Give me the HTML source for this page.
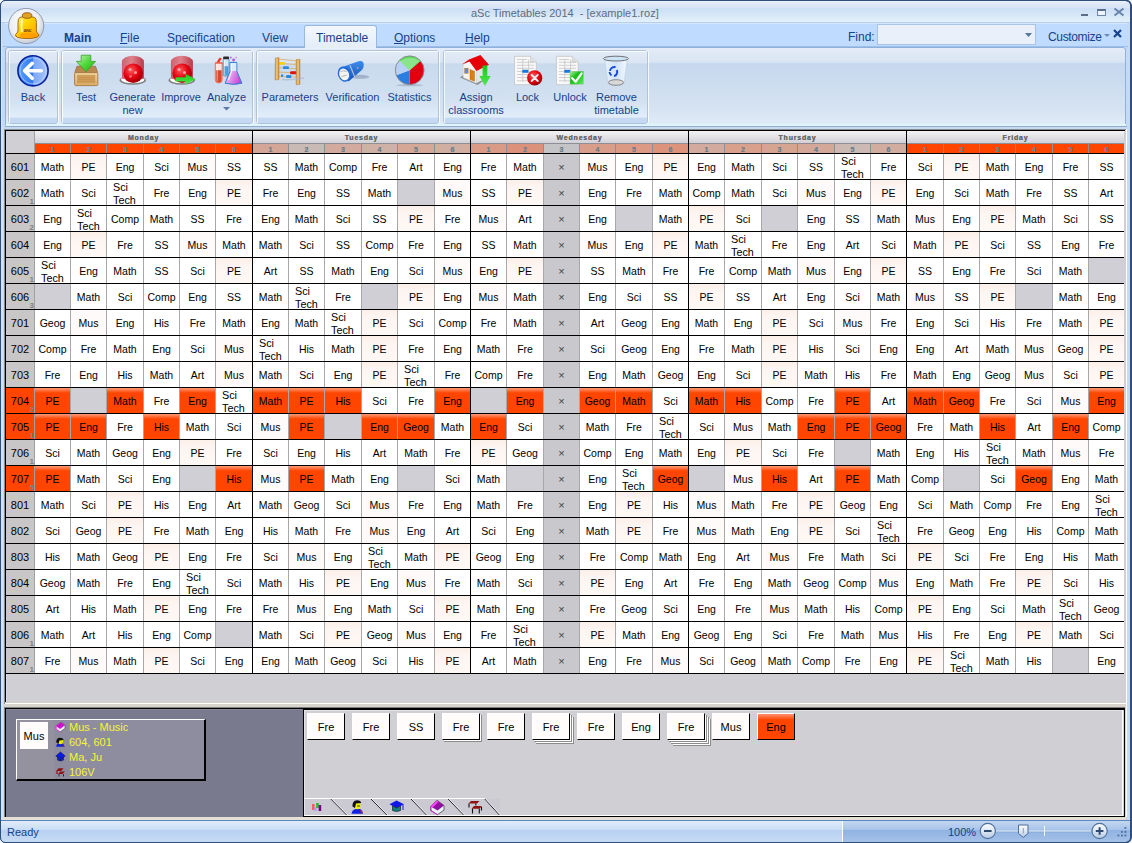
<!DOCTYPE html><html><head><meta charset="utf-8"><title>aSc Timetables</title><style>
*{margin:0;padding:0;box-sizing:border-box}
html,body{width:1132px;height:843px;overflow:hidden;background:#bfd6f3;font-family:"Liberation Sans",sans-serif}
div{position:absolute}
svg{position:absolute;overflow:visible}
.c{background:#fff;font-size:10.5px;color:#000;text-align:center;line-height:25px;padding-top:1px;white-space:nowrap;overflow:hidden}
.c2{line-height:13px;text-align:left;white-space:normal;padding-top:1px;font-size:10.8px}
.pe{background:linear-gradient(#fcefe9,#fdf5f1 30%,#fef8f5)}
.mu{background:#fffafa}
.o{background:linear-gradient(#ff9a78,#ff4500 5px,#ff4500)}
.g{background:#d0cfd5}
.x{background:#c9c8cc;color:#444;font-size:11px}
.vl{background:#a8a8a8;width:1px}
.bl{background:#000}
.rh{background:#c8c6c6;font-size:11px;color:#000;text-align:center;line-height:25px;padding-top:1px}
.rho{background:#ff4500}
.sub{font-size:8px;color:#808080;font-weight:bold;right:0px;bottom:0px;line-height:6px;height:6px;width:6px;text-align:right}
.ph{font-size:7px;font-weight:bold;color:#6f828c;text-align:center;line-height:9px;padding-top:1px;text-shadow:0 0 0.5px #6f828c}
.dn{font-size:7px;font-weight:bold;color:#6a6a6a;text-align:center;line-height:12px;letter-spacing:0.8px;padding-top:1px;text-shadow:0 0 0.5px #6a6a6a}
.rb{color:#15428b;font-size:11px;text-align:center;line-height:12.5px;white-space:nowrap}
.mt{color:#15428b;font-size:12px;line-height:14px;white-space:nowrap}
</style></head><body>
<div style="left:0px;top:0px;width:1132px;height:843px;background:#c5dbf5"></div>
<div style="left:0px;top:0px;width:1px;height:843px;background:#2e4f7c"></div>
<div style="left:1130px;top:0px;width:2px;height:843px;background:#2e4f7c"></div>
<div style="left:0px;top:842px;width:1132px;height:1px;background:#2e4f7c"></div>
<div style="left:1px;top:1px;width:2px;height:841px;background:#d3e3f7"></div>
<div style="left:0px;top:0px;width:1132px;height:1px;background:#2e4f7c"></div>
<div style="left:1px;top:1px;width:1129px;height:21px;background:linear-gradient(#eef3fb 0px,#e0eaf7 2px,#d6e4f6 7px,#cddff5 7px,#d3e4f7 12px,#e4f1fb 21px)"></div>
<div style="left:1px;top:22px;width:1129px;height:1px;background:#b3d0f2"></div>
<div style="left:471px;top:6px;font-size:11px;color:#5f6b7b;white-space:nowrap;line-height:14px">aSc Timetables 2014&nbsp; - [example1.roz]</div>
<div style="left:1081px;top:14px;width:7px;height:2px;background:#5a6e86"></div>
<div style="left:1097px;top:9px;width:9px;height:7px;border:1px solid #6f86a8;border-top:2px solid #5a6e86;background:#eef4fb"></div>
<svg style="left:1114px;top:8px" width="10" height="8"><path d="M0.5 0.5 L9.5 7.5 M9.5 0.5 L0.5 7.5" stroke="#6a85aa" stroke-width="2"/></svg>
<div style="left:1px;top:23px;width:1129px;height:24px;background:#bfdbff"></div>
<div style="left:1px;top:23px;width:1129px;height:1px;background:#d8e6f6"></div>
<div style="left:1127px;top:23px;width:3px;height:104px;background:#c4d9f3"></div>
<div style="left:1px;top:23px;width:4px;height:104px;background:#c4d9f3"></div>
<div style="left:1px;top:23px;width:1px;height:104px;background:#d6e5f8"></div>
<div style="left:3px;top:46px;width:1125px;height:1px;background:#9fbfe6"></div>
<div style="left:304px;top:25px;width:73px;height:24px;background:linear-gradient(#f4f8fd,#e2ecf8);border:1px solid #9ab8de;border-bottom:none;border-radius:3px 3px 0 0"></div>
<div class="mt" style="left:64px;top:31px;font-weight:bold;">Main</div>
<div class="mt" style="left:120px;top:31px;"><u>F</u>ile</div>
<div class="mt" style="left:167px;top:31px;">Specification</div>
<div class="mt" style="left:262px;top:31px;">View</div>
<div class="mt" style="left:316px;top:31px;">Timetable</div>
<div class="mt" style="left:394px;top:31px;"><u>O</u>ptions</div>
<div class="mt" style="left:465px;top:31px;"><u>H</u>elp</div>
<div class="mt" style="left:848px;top:30px">Find:</div>
<div style="left:877px;top:24px;width:159px;height:21px;background:#e9f0f9;border:1px solid #a9c3e3"></div>
<svg style="left:1025px;top:33px" width="7" height="4"><path d="M0 0 H7 L3.5 4Z" fill="#5577a0"/></svg>
<div class="mt" style="left:1048px;top:30px;letter-spacing:-0.35px">Customize</div>
<svg style="left:1104px;top:34px" width="6" height="3"><path d="M0 0 H6 L3 3Z" fill="#6d8db5"/></svg>
<svg style="left:1113px;top:29px" width="9" height="9"><path d="M1 1 L8 8 M8 1 L1 8" stroke="#15428b" stroke-width="2.2"/></svg>
<div style="left:5px;top:47px;width:1121px;height:80px;background:linear-gradient(#e3ecf7,#d9e5f3 18%,#c6d8ee 20%,#d6e3f2 80%,#e2edf9);border:1px solid #8eb0dd;border-top-color:#8eb0dd;border-radius:3px"></div>
<div style="left:305px;top:46px;width:71px;height:3px;background:linear-gradient(#e4eef9,#e8f0f9)"></div>
<div style="left:6px;top:124px;width:1120px;height:2px;background:#def5fc"></div>
<div style="left:5px;top:126px;width:1122px;height:1px;background:#97aac8"></div>
<div style="left:8px;top:50px;width:50px;height:74px;border:1px solid #afc3da;border-radius:3px;box-shadow:1px 0 0 rgba(255,255,255,0.8);background:linear-gradient(#e2ebf6,#dbe6f3 16%,#c9daee 18%,#d3e1f1 70%,#e2eefa 92%,#c5daf2 93%)"></div>
<div style="left:9px;top:51px;width:48px;height:72px;border-top:1px solid rgba(255,255,255,0.8);border-left:1px solid rgba(255,255,255,0.8);border-radius:2px 0 0 0;background:transparent"></div>
<div style="left:61px;top:50px;width:192px;height:74px;border:1px solid #afc3da;border-radius:3px;box-shadow:1px 0 0 rgba(255,255,255,0.8);background:linear-gradient(#e2ebf6,#dbe6f3 16%,#c9daee 18%,#d3e1f1 70%,#e2eefa 92%,#c5daf2 93%)"></div>
<div style="left:62px;top:51px;width:190px;height:72px;border-top:1px solid rgba(255,255,255,0.8);border-left:1px solid rgba(255,255,255,0.8);border-radius:2px 0 0 0;background:transparent"></div>
<div style="left:256px;top:50px;width:183px;height:74px;border:1px solid #afc3da;border-radius:3px;box-shadow:1px 0 0 rgba(255,255,255,0.8);background:linear-gradient(#e2ebf6,#dbe6f3 16%,#c9daee 18%,#d3e1f1 70%,#e2eefa 92%,#c5daf2 93%)"></div>
<div style="left:257px;top:51px;width:181px;height:72px;border-top:1px solid rgba(255,255,255,0.8);border-left:1px solid rgba(255,255,255,0.8);border-radius:2px 0 0 0;background:transparent"></div>
<div style="left:443px;top:50px;width:205px;height:74px;border:1px solid #afc3da;border-radius:3px;box-shadow:1px 0 0 rgba(255,255,255,0.8);background:linear-gradient(#e2ebf6,#dbe6f3 16%,#c9daee 18%,#d3e1f1 70%,#e2eefa 92%,#c5daf2 93%)"></div>
<div style="left:444px;top:51px;width:203px;height:72px;border-top:1px solid rgba(255,255,255,0.8);border-left:1px solid rgba(255,255,255,0.8);border-radius:2px 0 0 0;background:transparent"></div>
<div class="rb" style="left:-7px;top:91px;width:80px">Back</div>
<div class="rb" style="left:46px;top:91px;width:80px">Test</div>
<div class="rb" style="left:92.5px;top:91px;width:80px">Generate<br>new</div>
<div class="rb" style="left:141px;top:91px;width:80px">Improve</div>
<div class="rb" style="left:186.5px;top:91px;width:80px">Analyze</div>
<div class="rb" style="left:250px;top:91px;width:80px">Parameters</div>
<div class="rb" style="left:312.5px;top:91px;width:80px">Verification</div>
<div class="rb" style="left:369.5px;top:91px;width:80px">Statistics</div>
<div class="rb" style="left:436px;top:91px;width:80px">Assign<br>classrooms</div>
<div class="rb" style="left:487.5px;top:91px;width:80px">Lock</div>
<div class="rb" style="left:530px;top:91px;width:80px">Unlock</div>
<div class="rb" style="left:576.5px;top:91px;width:80px">Remove<br>timetable</div>
<svg style="left:223px;top:107px" width="7" height="4"><path d="M0 0 H7 L3.5 3.5Z" fill="#5a78a8"/></svg>
<svg style="left:0;top:0" width="1132" height="130" viewBox="0 0 1132 130">
<defs>
<radialGradient id="appbtn" cx="0.45" cy="0.4" r="0.6"><stop offset="0" stop-color="#ffffff"/><stop offset="0.7" stop-color="#eceef2"/><stop offset="1" stop-color="#c4c9d2"/></radialGradient>
<linearGradient id="bell" x1="0" y1="0" x2="1" y2="1"><stop offset="0" stop-color="#fff6a0"/><stop offset="0.35" stop-color="#ffd800"/><stop offset="1" stop-color="#ff9a00"/></linearGradient>
<linearGradient id="backg" x1="0" y1="0" x2="1" y2="0"><stop offset="0" stop-color="#5aa0ff"/><stop offset="0.5" stop-color="#2f78f0"/><stop offset="0.52" stop-color="#7ca8f8"/><stop offset="1" stop-color="#a8c4fb"/></linearGradient>
<linearGradient id="grn" x1="0" y1="0" x2="1" y2="1"><stop offset="0" stop-color="#c8f5b8"/><stop offset="0.5" stop-color="#4fd83a"/><stop offset="1" stop-color="#22b010"/></linearGradient>
<linearGradient id="grn2" x1="0" y1="0" x2="0" y2="1"><stop offset="0" stop-color="#18c818"/><stop offset="1" stop-color="#50e850"/></linearGradient>
<linearGradient id="box" x1="0" y1="0" x2="0" y2="1"><stop offset="0" stop-color="#f0d39e"/><stop offset="1" stop-color="#dcae6c"/></linearGradient>
<radialGradient id="redb" cx="0.4" cy="0.35" r="0.65"><stop offset="0" stop-color="#ff5a5a"/><stop offset="0.6" stop-color="#e20010"/><stop offset="1" stop-color="#a00008"/></radialGradient>
<linearGradient id="dome" x1="0" y1="0" x2="1" y2="0"><stop offset="0" stop-color="#d05a68"/><stop offset="0.45" stop-color="#de7e88"/><stop offset="1" stop-color="#b83040"/></linearGradient>
<linearGradient id="flask" x1="0" y1="0" x2="1" y2="1"><stop offset="0" stop-color="#f8d8f8"/><stop offset="1" stop-color="#c040d8"/></linearGradient>
<linearGradient id="wood" x1="0" y1="0" x2="1" y2="0"><stop offset="0" stop-color="#c89040"/><stop offset="0.5" stop-color="#f0cc88"/><stop offset="1" stop-color="#b88030"/></linearGradient>
<linearGradient id="torch" x1="0" y1="0" x2="0" y2="1"><stop offset="0" stop-color="#3c8cf0"/><stop offset="1" stop-color="#1450b8"/></linearGradient>
<linearGradient id="trash" x1="0" y1="0" x2="1" y2="0"><stop offset="0" stop-color="#e8f2fc"/><stop offset="0.5" stop-color="#d0e4f8"/><stop offset="1" stop-color="#f4f8fd"/></linearGradient>
<linearGradient id="chk" x1="0" y1="0" x2="1" y2="1"><stop offset="0" stop-color="#b0f0a0"/><stop offset="0.4" stop-color="#10c010"/><stop offset="1" stop-color="#60e860"/></linearGradient>
</defs>
<!-- app button -->
<circle cx="26.2" cy="26" r="17.6" fill="url(#appbtn)" stroke="#8e9cb2" stroke-width="1"/>
<path d="M19.8 17.4 Q18 18.6 18 22.5 V30.8 Q17.6 33.2 15.6 34.4 Q14.2 38.2 27.2 38.6 Q40.2 38.2 38.8 34.4 Q36.8 33.2 36.4 30.8 V22.5 Q36.4 18.6 34.6 17.4 Q27.2 14.8 19.8 17.4 Z" fill="url(#bell)" stroke="#9a5a10" stroke-width="0.9"/>
<ellipse cx="28" cy="35.2" rx="8.5" ry="2.6" fill="#ff9a00" opacity="0.85"/>
<path d="M22 19.5 Q21.2 25 21.8 32" stroke="#fffbe0" stroke-width="1.8" fill="none" opacity="0.85"/>
<ellipse cx="27.1" cy="15.5" rx="4.8" ry="2.8" fill="#e0a020" stroke="#8a4a10" stroke-width="0.8"/>
<text x="27.5" y="31.6" font-size="6.5" font-family="Liberation Serif" font-weight="bold" fill="#7a4010" text-anchor="middle" letter-spacing="-0.3">asc</text>
<!-- Back -->
<circle cx="33" cy="70.8" r="15.1" fill="url(#backg)" stroke="#0a209a" stroke-width="1.6"/>
<circle cx="33" cy="70.8" r="13" fill="none" stroke="#cfe2ff" stroke-width="0.8" opacity="0.7"/>
<path d="M41.3 70.8 H25.2 M32.2 63.3 L24.6 70.8 L32.2 78.3" stroke="#fff" stroke-width="3.6" stroke-linecap="round" stroke-linejoin="round" fill="none"/>
<!-- Test -->
<path d="M74.8 72.5 L77 66.3 H95.5 L97.6 72.5 Z" fill="#b88850" stroke="#9a6a38" stroke-width="0.8"/>
<rect x="74.6" y="72.6" width="23.2" height="13" rx="1" fill="url(#box)" stroke="#a87840" stroke-width="0.9"/>
<rect x="77.5" y="75.2" width="17.4" height="7.8" fill="#d8a860" stroke="#c08c48" stroke-width="0.5"/>
<path d="M78 77.2H94.5 M78 79.2H94.5 M78 81.2H94.5" stroke="#b88040" stroke-width="0.7"/>
<path d="M81.2 55.2 H90.8 V61.4 H95.6 L86 71.8 L76.4 61.4 H81.2 Z" fill="url(#grn)" stroke="#3a9a2a" stroke-width="0.8"/>
<!-- Generate -->
<ellipse cx="132.8" cy="80.2" rx="13.2" ry="4.6" fill="#808080"/>
<ellipse cx="132.8" cy="79.6" rx="11.8" ry="3.7" fill="#ffffff"/>
<path d="M121.9 62 A11 6.2 0 0 1 143.9 62 V78.5 Q132.8 82.5 121.9 78.5 Z" fill="url(#dome)" opacity="0.95"/>
<circle cx="133.2" cy="73.2" r="9.8" fill="url(#redb)"/>
<circle cx="130" cy="69.5" r="1.5" fill="#ffc0c0" opacity="0.8"/><circle cx="135.5" cy="72.5" r="1.5" fill="#ffc0c0" opacity="0.8"/><circle cx="130.5" cy="76.5" r="1.3" fill="#ffc0c0" opacity="0.6"/>
<!-- Improve -->
<ellipse cx="181.8" cy="80.2" rx="13.2" ry="4.6" fill="#808080"/>
<ellipse cx="181.8" cy="79.6" rx="11.8" ry="3.7" fill="#ffffff"/>
<path d="M170.9 62 A11 6.2 0 0 1 192.9 62 V78.5 Q181.8 82.5 170.9 78.5 Z" fill="url(#dome)" opacity="0.95"/>
<circle cx="182.2" cy="73.2" r="9.8" fill="url(#redb)"/>
<circle cx="179" cy="69.5" r="1.5" fill="#ffc0c0" opacity="0.8"/><circle cx="184.5" cy="72.5" r="1.5" fill="#ffc0c0" opacity="0.8"/>
<path d="M175.4 77.2 H185.6 V73.8 L195.6 79.2 L185.6 84.6 V81.4 H175.4 Z" fill="url(#grn2)"/>
<!-- Analyze -->
<path d="M215.3 62.8 H222.2 V79.6 A3.45 3.45 0 0 1 215.3 79.6 Z" fill="#fbe2dc" stroke="#e4674c" stroke-width="0.9"/>
<path d="M215.9 70.2 H221.6 V79.6 A2.85 2.85 0 0 1 215.9 79.6 Z" fill="#d64a2c"/>
<path d="M217.2 64 V81" stroke="#fff" stroke-width="1" opacity="0.55"/>
<path d="M216.6 62.2 L219.6 57.4 L221.8 58.6 L219 62.8 Z" fill="#f03a20"/><path d="M215.2 63 H222.3" stroke="#f05a40" stroke-width="1.2"/>
<rect x="223.2" y="58.4" width="5.8" height="17.6" rx="1.2" fill="#cfe8f6" stroke="#3a8cc8" stroke-width="0.8"/>
<rect x="223.8" y="66.2" width="4.6" height="9.2" fill="#4aa0d8"/>
<rect x="223.2" y="56.4" width="5.8" height="2.8" rx="0.6" fill="#2a2a2a"/>
<path d="M224.6 60 V75" stroke="#fff" stroke-width="0.9" opacity="0.6"/>
<defs><linearGradient id="flask2" x1="0" y1="0" x2="1" y2="0.6"><stop offset="0" stop-color="#fff0fc"/><stop offset="0.45" stop-color="#e8a8f0"/><stop offset="1" stop-color="#c848d8"/></linearGradient></defs>
<path d="M230 62.4 H236.8 V71.2 L241.9 83.2 Q233.5 85.6 225.1 83.2 L230 71.2 Z" fill="url(#flask2)" stroke="#2a80d0" stroke-width="1"/>
<path d="M230.5 63 H236.3 V71 H230.5 Z" fill="#d8ecfa"/>
<path d="M231.5 64 V71.5 L228.5 80" stroke="#fff" stroke-width="1.1" opacity="0.8" fill="none"/>
<circle cx="233.6" cy="60" r="1.4" fill="#b050e0"/><circle cx="230.8" cy="57.6" r="1.1" fill="#c070f0"/><circle cx="236.2" cy="57.4" r="1" fill="#d8a0f0"/>
<!-- Parameters abacus -->
<path d="M277.5 59 L298 61 M277 63.2 L297.5 64.6 M277 67.6 L297.5 68.8 M277 72 L297.5 73 M277 76.4 L297.5 77.2" stroke="#d8b070" stroke-width="0.9"/>
<rect x="278.3" y="62" width="6.8" height="2.8" rx="1.2" fill="#f0d010"/>
<rect x="295.2" y="62.6" width="2.6" height="2.8" rx="1" fill="#f0d010"/>
<rect x="283" y="66.3" width="6" height="2.8" rx="1.2" fill="#2a88e0"/>
<rect x="290" y="71.3" width="7" height="3" rx="1.2" fill="#e01010"/>
<rect x="281" y="74.2" width="2.2" height="2.8" rx="1" fill="#2a88e0"/>
<rect x="286" y="75" width="5.4" height="3" rx="1.2" fill="#2a88e0"/>
<path d="M275.3 58 L279 57.6 L279 79.6 L275 80 Z" fill="url(#wood)" stroke="#b08040" stroke-width="0.5"/>
<path d="M296.2 59.6 L300 59.2 L300 84.3 L296.2 84.8 Z" fill="url(#wood)" stroke="#b08040" stroke-width="0.5"/>
<path d="M282 79.5 Q292 80.5 304 78" stroke="#aab4c4" stroke-width="1.5" fill="none" opacity="0.6"/>
<!-- Verification flashlight -->
<ellipse cx="360" cy="76.8" rx="9.5" ry="2" fill="#8898b0" opacity="0.6"/>
<path d="M342.5 67 L358.5 61.3 Q363.6 60 363.8 64.6 Q363.9 68.4 361.6 70.2 L348.5 81.6 Z" fill="url(#torch)"/>
<path d="M350 65.2 L354.8 77.2" stroke="#b8c8e0" stroke-width="1.1"/>
<circle cx="357.6" cy="68" r="0.9" fill="#f0a040"/>
<ellipse cx="344.3" cy="74.1" rx="6.3" ry="7.8" transform="rotate(-22 344.3 74.1)" fill="#1e6ad8"/>
<ellipse cx="344.1" cy="74.4" rx="4.8" ry="6.1" transform="rotate(-22 344.1 74.4)" fill="#f4f4f4"/>
<path d="M340.6 71.5 Q343.5 70 346.5 71.5 M341.5 76.5 L346.8 75" stroke="#9a9a9a" stroke-width="0.7" fill="none"/>
<!-- Statistics pie -->
<ellipse cx="409.7" cy="85.2" rx="13" ry="1" fill="#8898b0" opacity="0.5"/>
<path d="M409.7 70.3 L420.4 61 A14.2 14.2 0 0 1 409.7 84.5 Z" fill="#e00010"/>
<path d="M409.7 70.3 L409.7 84.5 A14.2 14.2 0 0 1 396.4 75.2 Z" fill="#2a7ee0"/>
<path d="M409.7 70.3 L396.4 75.2 A14.2 14.2 0 0 1 399.4 60.5 Z" fill="#b8d0f4"/>
<path d="M409.7 70.3 L399.4 60.5 A14.2 14.2 0 0 1 420.4 61 Z" fill="#58d858"/>
<path d="M400 61 Q409.7 55 419.5 60.5 L409.7 70.3Z" fill="#fff" opacity="0.3"/>
<circle cx="409.7" cy="70.3" r="14.4" fill="none" stroke="#8a8a8a" stroke-width="1"/>
<!-- Assign house -->
<path d="M460 77.6 L477.5 85 L483 81 L465 74 Z" fill="#7a7a7a" opacity="0.8"/>
<path d="M463.2 64.5 L469.5 60.5 L476.4 70 L476.4 83.2 L463.2 77.6 Z" fill="#f4f4f4" stroke="#c8c8c8" stroke-width="0.5"/>
<path d="M476.4 70 L488 64.5 L488 77 L476.4 83.2 Z" fill="#e4e4e4"/>
<path d="M461.9 64.6 L469 59.6 L480.4 55.1 L489 64.8 L476.4 71 L469.5 61.5 Z" fill="#e80008"/>
<rect x="464.3" y="68" width="4.2" height="5.6" fill="#b08040"/><rect x="464.9" y="68.6" width="3" height="4.4" fill="#5a90e0"/>
<path d="M470 69.5 L474.5 71.2 L474.5 81.2 L470 79.5 Z" fill="#d88010" stroke="#a06010" stroke-width="0.4"/>
<path d="M482.6 65.5 H487.4 V76 H490.6 L485 86 L479.4 76 H482.6 Z" fill="url(#grn2)"/>
<!-- Lock -->
<path d="M514.5 56.3 H530.5 L536.3 62 V84.7 H514.5 Z" fill="#f8f8f8" stroke="#c4c4c4" stroke-width="0.8"/>
<path d="M530.5 56.3 V62 H536.3" fill="#e0e0e0" stroke="#c4c4c4" stroke-width="0.6"/>
<path d="M517 59.5 H527 M517 62.3 H534 M517 65.3H534 M517 68.3H534 M517 71.5H534 M517 74.5H534 M517 77.5H534 M517 80.8H534" stroke="#c0c0c0" stroke-width="0.7"/>
<path d="M522.8 59.5 V82 M528.6 59.5 V82" stroke="#c0c0c0" stroke-width="0.7"/>
<rect x="522.3" y="69.8" width="6" height="3" fill="#1878e0"/>
<circle cx="534.7" cy="77.9" r="7.6" fill="url(#redb)"/>
<path d="M531.6 74.8 L537.8 81 M537.8 74.8 L531.6 81" stroke="#e8f0f0" stroke-width="1.9" stroke-linecap="round"/>
<!-- Unlock -->
<path d="M556.4 56.3 H572.4 L578.2 62 V84.7 H556.4 Z" fill="#f8f8f8" stroke="#c4c4c4" stroke-width="0.8"/>
<path d="M572.4 56.3 V62 H578.2" fill="#e0e0e0" stroke="#c4c4c4" stroke-width="0.6"/>
<path d="M559 59.5 H569 M559 62.3 H576 M559 65.3H576 M559 68.3H576 M559 71.5H576 M559 74.5H576 M559 77.5H576 M559 80.8H576" stroke="#c0c0c0" stroke-width="0.7"/>
<path d="M564.8 59.5 V82 M570.6 59.5 V82" stroke="#c0c0c0" stroke-width="0.7"/>
<rect x="564.3" y="69.8" width="6" height="3" fill="#1878e0"/>
<rect x="570" y="71.2" width="13.5" height="13.1" fill="url(#chk)" stroke="#a0c0a0" stroke-width="0.4"/>
<path d="M572.2 78.2 L575.6 81.8 L581.6 73.4" stroke="#fff" stroke-width="2.2" fill="none" stroke-linecap="round" stroke-linejoin="round"/>
<!-- Remove trash -->
<path d="M604.5 59 L607.8 82.5 Q616 86.5 624.2 82.5 L627.2 59 Z" fill="url(#trash)" stroke="#b8cce0" stroke-width="0.6"/>
<ellipse cx="616" cy="82.5" rx="7.6" ry="2.8" fill="#d8d8d8" stroke="#707070" stroke-width="0.8"/>
<ellipse cx="615.9" cy="58.6" rx="12.6" ry="2.4" fill="#cce4f8" stroke="#707070" stroke-width="1"/>
<path d="M610 71 A4.5 4.5 0 0 1 615.6 67.2 M616.8 70 A4.5 4.5 0 0 1 614 76.2 M611.5 75.4 A4.5 4.5 0 0 1 609.5 72" stroke="#1848d8" stroke-width="1.9" fill="none"/>
</svg>

<div style="left:4px;top:129px;width:1122px;height:1px;background:#8c8c8c"></div>
<div style="left:4px;top:129px;width:1px;height:580px;background:#8c8c8c"></div>
<div style="left:5px;top:130px;width:1120px;height:1px;background:#000"></div>
<div style="left:5px;top:130px;width:1px;height:579px;background:#000"></div>
<div style="left:6px;top:131px;width:1119px;height:571px;background:#d0cfd4"></div>
<div style="left:6px;top:131px;width:1119px;height:1px;background:#e2e2e6"></div>
<div style="left:6px;top:131px;width:1px;height:571px;background:#dcdce0"></div>
<div style="left:1125px;top:130px;width:1px;height:573px;background:#d4d0c8"></div>
<div style="left:1126px;top:129px;width:1px;height:575px;background:#fff"></div>
<div style="left:5px;top:702px;width:1121px;height:1px;background:#d4d0c8"></div>
<div style="left:5px;top:703px;width:1122px;height:1px;background:#fff"></div>
<div style="left:4px;top:704px;width:1123px;height:3px;background:#d8d4cc"></div>
<div style="left:4px;top:707px;width:1122px;height:1px;background:#808080"></div>
<div style="left:1125px;top:704px;width:2px;height:116px;background:#d8d4cc"></div>
<div style="left:1126px;top:704px;width:1px;height:113px;background:#fbfaf6"></div>
<div style="left:35px;top:131px;width:1089px;height:12px;background:linear-gradient(#f3f3f5,#d1d0d6)"></div>
<div style="left:35px;top:143px;width:1089px;height:1px;background:#8c9094"></div>
<div class="dn" style="left:35px;top:131px;width:217px;height:12px">Monday</div>
<div class="ph" style="left:35px;top:144px;width:35px;height:9px;background:#ff4500">1</div>
<div class="ph" style="left:71px;top:144px;width:35px;height:9px;background:#ff4500">2</div>
<div style="left:70px;top:144px;width:1px;height:9px;background:#8c9094"></div>
<div class="ph" style="left:107px;top:144px;width:36px;height:9px;background:#ff4500">3</div>
<div style="left:106px;top:144px;width:1px;height:9px;background:#8c9094"></div>
<div class="ph" style="left:144px;top:144px;width:35px;height:9px;background:#ff4500">4</div>
<div style="left:143px;top:144px;width:1px;height:9px;background:#8c9094"></div>
<div class="ph" style="left:180px;top:144px;width:35px;height:9px;background:#ff4500">5</div>
<div style="left:179px;top:144px;width:1px;height:9px;background:#8c9094"></div>
<div class="ph" style="left:216px;top:144px;width:36px;height:9px;background:#ff4500">6</div>
<div style="left:215px;top:144px;width:1px;height:9px;background:#8c9094"></div>
<div class="dn" style="left:253px;top:131px;width:217px;height:12px">Tuesday</div>
<div class="ph" style="left:253px;top:144px;width:35px;height:9px;background:#d3a697">1</div>
<div class="ph" style="left:289px;top:144px;width:35px;height:9px;background:#c9bab5">2</div>
<div style="left:288px;top:144px;width:1px;height:9px;background:#8c9094"></div>
<div class="ph" style="left:325px;top:144px;width:36px;height:9px;background:#d2ab9e">3</div>
<div style="left:324px;top:144px;width:1px;height:9px;background:#8c9094"></div>
<div class="ph" style="left:362px;top:144px;width:35px;height:9px;background:#cfb1a6">4</div>
<div style="left:361px;top:144px;width:1px;height:9px;background:#8c9094"></div>
<div class="ph" style="left:398px;top:144px;width:36px;height:9px;background:#d4a796">5</div>
<div style="left:397px;top:144px;width:1px;height:9px;background:#8c9094"></div>
<div class="ph" style="left:435px;top:144px;width:35px;height:9px;background:#d0aea2">6</div>
<div style="left:434px;top:144px;width:1px;height:9px;background:#8c9094"></div>
<div class="dn" style="left:471px;top:131px;width:217px;height:12px">Wednesday</div>
<div class="ph" style="left:471px;top:144px;width:35px;height:9px;background:#d99b86">1</div>
<div class="ph" style="left:507px;top:144px;width:36px;height:9px;background:#dc917a">2</div>
<div style="left:506px;top:144px;width:1px;height:9px;background:#8c9094"></div>
<div class="ph" style="left:544px;top:144px;width:35px;height:9px;background:#c4c4c6">3</div>
<div style="left:543px;top:144px;width:1px;height:9px;background:#8c9094"></div>
<div class="ph" style="left:580px;top:144px;width:35px;height:9px;background:#d99e8a">4</div>
<div style="left:579px;top:144px;width:1px;height:9px;background:#8c9094"></div>
<div class="ph" style="left:616px;top:144px;width:36px;height:9px;background:#da9a84">5</div>
<div style="left:615px;top:144px;width:1px;height:9px;background:#8c9094"></div>
<div class="ph" style="left:653px;top:144px;width:35px;height:9px;background:#dc927b">6</div>
<div style="left:652px;top:144px;width:1px;height:9px;background:#8c9094"></div>
<div class="dn" style="left:689px;top:131px;width:217px;height:12px">Thursday</div>
<div class="ph" style="left:689px;top:144px;width:35px;height:9px;background:#d3ab9e">1</div>
<div class="ph" style="left:725px;top:144px;width:36px;height:9px;background:#d9a08b">2</div>
<div style="left:724px;top:144px;width:1px;height:9px;background:#8c9094"></div>
<div class="ph" style="left:762px;top:144px;width:35px;height:9px;background:#d6a592">3</div>
<div style="left:761px;top:144px;width:1px;height:9px;background:#8c9094"></div>
<div class="ph" style="left:798px;top:144px;width:36px;height:9px;background:#d4a898">4</div>
<div style="left:797px;top:144px;width:1px;height:9px;background:#8c9094"></div>
<div class="ph" style="left:835px;top:144px;width:35px;height:9px;background:#cbb9b3">5</div>
<div style="left:834px;top:144px;width:1px;height:9px;background:#8c9094"></div>
<div class="ph" style="left:871px;top:144px;width:35px;height:9px;background:#d2ad9f">6</div>
<div style="left:870px;top:144px;width:1px;height:9px;background:#8c9094"></div>
<div class="dn" style="left:907px;top:131px;width:217px;height:12px">Friday</div>
<div class="ph" style="left:907px;top:144px;width:36px;height:9px;background:#ff4500">1</div>
<div class="ph" style="left:944px;top:144px;width:35px;height:9px;background:#ff4500">2</div>
<div style="left:943px;top:144px;width:1px;height:9px;background:#8c9094"></div>
<div class="ph" style="left:980px;top:144px;width:35px;height:9px;background:#ff4500">3</div>
<div style="left:979px;top:144px;width:1px;height:9px;background:#8c9094"></div>
<div class="ph" style="left:1016px;top:144px;width:36px;height:9px;background:#ff4500">4</div>
<div style="left:1015px;top:144px;width:1px;height:9px;background:#8c9094"></div>
<div class="ph" style="left:1053px;top:144px;width:35px;height:9px;background:#ff4500">5</div>
<div style="left:1052px;top:144px;width:1px;height:9px;background:#8c9094"></div>
<div class="ph" style="left:1089px;top:144px;width:35px;height:9px;background:#ff4500">6</div>
<div style="left:1088px;top:144px;width:1px;height:9px;background:#8c9094"></div>
<div style="left:6px;top:131px;width:28px;height:22px;background:#d0cfd4"></div>
<div style="left:34px;top:131px;width:1px;height:543px;background:#a0a0a0"></div>
<div style="left:252px;top:131px;width:1px;height:543px;background:#000"></div>
<div style="left:470px;top:131px;width:1px;height:543px;background:#000"></div>
<div style="left:688px;top:131px;width:1px;height:543px;background:#000"></div>
<div style="left:906px;top:131px;width:1px;height:543px;background:#000"></div>
<div style="left:5px;top:153px;width:1119px;height:1px;background:#000"></div>
<div class="rh" style="left:6px;top:154px;width:28px;height:25px;">601</div>
<div class="c" style="left:35px;top:154px;width:35px;height:25px;">Math</div>
<div style="left:70px;top:154px;width:1px;height:25px;background:#a8a8a8"></div>
<div class="c pe" style="left:71px;top:154px;width:35px;height:25px;">PE</div>
<div style="left:106px;top:154px;width:1px;height:25px;background:#a8a8a8"></div>
<div class="c" style="left:107px;top:154px;width:36px;height:25px;">Eng</div>
<div style="left:143px;top:154px;width:1px;height:25px;background:#a8a8a8"></div>
<div class="c" style="left:144px;top:154px;width:35px;height:25px;">Sci</div>
<div style="left:179px;top:154px;width:1px;height:25px;background:#a8a8a8"></div>
<div class="c mu" style="left:180px;top:154px;width:35px;height:25px;">Mus</div>
<div style="left:215px;top:154px;width:1px;height:25px;background:#a8a8a8"></div>
<div class="c" style="left:216px;top:154px;width:36px;height:25px;">SS</div>
<div class="c" style="left:253px;top:154px;width:35px;height:25px;">SS</div>
<div style="left:288px;top:154px;width:1px;height:25px;background:#a8a8a8"></div>
<div class="c" style="left:289px;top:154px;width:35px;height:25px;">Math</div>
<div style="left:324px;top:154px;width:1px;height:25px;background:#a8a8a8"></div>
<div class="c" style="left:325px;top:154px;width:36px;height:25px;">Comp</div>
<div style="left:361px;top:154px;width:1px;height:25px;background:#a8a8a8"></div>
<div class="c" style="left:362px;top:154px;width:35px;height:25px;">Fre</div>
<div style="left:397px;top:154px;width:1px;height:25px;background:#a8a8a8"></div>
<div class="c" style="left:398px;top:154px;width:36px;height:25px;">Art</div>
<div style="left:434px;top:154px;width:1px;height:25px;background:#a8a8a8"></div>
<div class="c" style="left:435px;top:154px;width:35px;height:25px;">Eng</div>
<div class="c" style="left:471px;top:154px;width:35px;height:25px;">Fre</div>
<div style="left:506px;top:154px;width:1px;height:25px;background:#a8a8a8"></div>
<div class="c" style="left:507px;top:154px;width:36px;height:25px;">Math</div>
<div style="left:543px;top:154px;width:1px;height:25px;background:#a8a8a8"></div>
<div class="c x" style="left:544px;top:154px;width:35px;height:25px;">&#215;</div>
<div style="left:579px;top:154px;width:1px;height:25px;background:#a8a8a8"></div>
<div class="c mu" style="left:580px;top:154px;width:35px;height:25px;">Mus</div>
<div style="left:615px;top:154px;width:1px;height:25px;background:#a8a8a8"></div>
<div class="c" style="left:616px;top:154px;width:36px;height:25px;">Eng</div>
<div style="left:652px;top:154px;width:1px;height:25px;background:#a8a8a8"></div>
<div class="c pe" style="left:653px;top:154px;width:35px;height:25px;">PE</div>
<div class="c" style="left:689px;top:154px;width:35px;height:25px;">Eng</div>
<div style="left:724px;top:154px;width:1px;height:25px;background:#a8a8a8"></div>
<div class="c" style="left:725px;top:154px;width:36px;height:25px;">Math</div>
<div style="left:761px;top:154px;width:1px;height:25px;background:#a8a8a8"></div>
<div class="c" style="left:762px;top:154px;width:35px;height:25px;">Sci</div>
<div style="left:797px;top:154px;width:1px;height:25px;background:#a8a8a8"></div>
<div class="c" style="left:798px;top:154px;width:36px;height:25px;">SS</div>
<div style="left:834px;top:154px;width:1px;height:25px;background:#a8a8a8"></div>
<div class="c c2" style="left:835px;top:154px;width:35px;height:25px;padding-left:6px">Sci<br>Tech</div>
<div style="left:870px;top:154px;width:1px;height:25px;background:#a8a8a8"></div>
<div class="c" style="left:871px;top:154px;width:35px;height:25px;">Fre</div>
<div class="c" style="left:907px;top:154px;width:36px;height:25px;">Sci</div>
<div style="left:943px;top:154px;width:1px;height:25px;background:#a8a8a8"></div>
<div class="c pe" style="left:944px;top:154px;width:35px;height:25px;">PE</div>
<div style="left:979px;top:154px;width:1px;height:25px;background:#a8a8a8"></div>
<div class="c" style="left:980px;top:154px;width:35px;height:25px;">Math</div>
<div style="left:1015px;top:154px;width:1px;height:25px;background:#a8a8a8"></div>
<div class="c" style="left:1016px;top:154px;width:36px;height:25px;">Eng</div>
<div style="left:1052px;top:154px;width:1px;height:25px;background:#a8a8a8"></div>
<div class="c" style="left:1053px;top:154px;width:35px;height:25px;">Fre</div>
<div style="left:1088px;top:154px;width:1px;height:25px;background:#a8a8a8"></div>
<div class="c" style="left:1089px;top:154px;width:35px;height:25px;">SS</div>
<div style="left:5px;top:179px;width:1119px;height:1px;background:#000"></div>
<div class="rh" style="left:6px;top:180px;width:28px;height:25px;">602<div class="sub">1</div></div>
<div class="c" style="left:35px;top:180px;width:35px;height:25px;">Math</div>
<div style="left:70px;top:180px;width:1px;height:25px;background:#a8a8a8"></div>
<div class="c" style="left:71px;top:180px;width:35px;height:25px;">Sci</div>
<div style="left:106px;top:180px;width:1px;height:25px;background:#a8a8a8"></div>
<div class="c c2" style="left:107px;top:180px;width:36px;height:25px;padding-left:6px">Sci<br>Tech</div>
<div style="left:143px;top:180px;width:1px;height:25px;background:#a8a8a8"></div>
<div class="c" style="left:144px;top:180px;width:35px;height:25px;">Fre</div>
<div style="left:179px;top:180px;width:1px;height:25px;background:#a8a8a8"></div>
<div class="c" style="left:180px;top:180px;width:35px;height:25px;">Eng</div>
<div style="left:215px;top:180px;width:1px;height:25px;background:#a8a8a8"></div>
<div class="c pe" style="left:216px;top:180px;width:36px;height:25px;">PE</div>
<div class="c" style="left:253px;top:180px;width:35px;height:25px;">Fre</div>
<div style="left:288px;top:180px;width:1px;height:25px;background:#a8a8a8"></div>
<div class="c" style="left:289px;top:180px;width:35px;height:25px;">Eng</div>
<div style="left:324px;top:180px;width:1px;height:25px;background:#a8a8a8"></div>
<div class="c" style="left:325px;top:180px;width:36px;height:25px;">SS</div>
<div style="left:361px;top:180px;width:1px;height:25px;background:#a8a8a8"></div>
<div class="c" style="left:362px;top:180px;width:35px;height:25px;">Math</div>
<div style="left:397px;top:180px;width:1px;height:25px;background:#a8a8a8"></div>
<div class="c g" style="left:398px;top:180px;width:36px;height:25px;"></div>
<div style="left:434px;top:180px;width:1px;height:25px;background:#a8a8a8"></div>
<div class="c mu" style="left:435px;top:180px;width:35px;height:25px;">Mus</div>
<div class="c" style="left:471px;top:180px;width:35px;height:25px;">SS</div>
<div style="left:506px;top:180px;width:1px;height:25px;background:#a8a8a8"></div>
<div class="c pe" style="left:507px;top:180px;width:36px;height:25px;">PE</div>
<div style="left:543px;top:180px;width:1px;height:25px;background:#a8a8a8"></div>
<div class="c x" style="left:544px;top:180px;width:35px;height:25px;">&#215;</div>
<div style="left:579px;top:180px;width:1px;height:25px;background:#a8a8a8"></div>
<div class="c" style="left:580px;top:180px;width:35px;height:25px;">Eng</div>
<div style="left:615px;top:180px;width:1px;height:25px;background:#a8a8a8"></div>
<div class="c" style="left:616px;top:180px;width:36px;height:25px;">Fre</div>
<div style="left:652px;top:180px;width:1px;height:25px;background:#a8a8a8"></div>
<div class="c" style="left:653px;top:180px;width:35px;height:25px;">Math</div>
<div class="c" style="left:689px;top:180px;width:35px;height:25px;">Comp</div>
<div style="left:724px;top:180px;width:1px;height:25px;background:#a8a8a8"></div>
<div class="c" style="left:725px;top:180px;width:36px;height:25px;">Math</div>
<div style="left:761px;top:180px;width:1px;height:25px;background:#a8a8a8"></div>
<div class="c" style="left:762px;top:180px;width:35px;height:25px;">Sci</div>
<div style="left:797px;top:180px;width:1px;height:25px;background:#a8a8a8"></div>
<div class="c mu" style="left:798px;top:180px;width:36px;height:25px;">Mus</div>
<div style="left:834px;top:180px;width:1px;height:25px;background:#a8a8a8"></div>
<div class="c" style="left:835px;top:180px;width:35px;height:25px;">Eng</div>
<div style="left:870px;top:180px;width:1px;height:25px;background:#a8a8a8"></div>
<div class="c pe" style="left:871px;top:180px;width:35px;height:25px;">PE</div>
<div class="c" style="left:907px;top:180px;width:36px;height:25px;">Eng</div>
<div style="left:943px;top:180px;width:1px;height:25px;background:#a8a8a8"></div>
<div class="c" style="left:944px;top:180px;width:35px;height:25px;">Sci</div>
<div style="left:979px;top:180px;width:1px;height:25px;background:#a8a8a8"></div>
<div class="c" style="left:980px;top:180px;width:35px;height:25px;">Math</div>
<div style="left:1015px;top:180px;width:1px;height:25px;background:#a8a8a8"></div>
<div class="c" style="left:1016px;top:180px;width:36px;height:25px;">Fre</div>
<div style="left:1052px;top:180px;width:1px;height:25px;background:#a8a8a8"></div>
<div class="c" style="left:1053px;top:180px;width:35px;height:25px;">SS</div>
<div style="left:1088px;top:180px;width:1px;height:25px;background:#a8a8a8"></div>
<div class="c" style="left:1089px;top:180px;width:35px;height:25px;">Art</div>
<div style="left:5px;top:205px;width:1119px;height:1px;background:#000"></div>
<div class="rh" style="left:6px;top:206px;width:28px;height:25px;">603<div class="sub">2</div></div>
<div class="c" style="left:35px;top:206px;width:35px;height:25px;">Eng</div>
<div style="left:70px;top:206px;width:1px;height:25px;background:#a8a8a8"></div>
<div class="c c2" style="left:71px;top:206px;width:35px;height:25px;padding-left:6px">Sci<br>Tech</div>
<div style="left:106px;top:206px;width:1px;height:25px;background:#a8a8a8"></div>
<div class="c" style="left:107px;top:206px;width:36px;height:25px;">Comp</div>
<div style="left:143px;top:206px;width:1px;height:25px;background:#a8a8a8"></div>
<div class="c" style="left:144px;top:206px;width:35px;height:25px;">Math</div>
<div style="left:179px;top:206px;width:1px;height:25px;background:#a8a8a8"></div>
<div class="c" style="left:180px;top:206px;width:35px;height:25px;">SS</div>
<div style="left:215px;top:206px;width:1px;height:25px;background:#a8a8a8"></div>
<div class="c" style="left:216px;top:206px;width:36px;height:25px;">Fre</div>
<div class="c" style="left:253px;top:206px;width:35px;height:25px;">Eng</div>
<div style="left:288px;top:206px;width:1px;height:25px;background:#a8a8a8"></div>
<div class="c" style="left:289px;top:206px;width:35px;height:25px;">Math</div>
<div style="left:324px;top:206px;width:1px;height:25px;background:#a8a8a8"></div>
<div class="c" style="left:325px;top:206px;width:36px;height:25px;">Sci</div>
<div style="left:361px;top:206px;width:1px;height:25px;background:#a8a8a8"></div>
<div class="c" style="left:362px;top:206px;width:35px;height:25px;">SS</div>
<div style="left:397px;top:206px;width:1px;height:25px;background:#a8a8a8"></div>
<div class="c pe" style="left:398px;top:206px;width:36px;height:25px;">PE</div>
<div style="left:434px;top:206px;width:1px;height:25px;background:#a8a8a8"></div>
<div class="c" style="left:435px;top:206px;width:35px;height:25px;">Fre</div>
<div class="c mu" style="left:471px;top:206px;width:35px;height:25px;">Mus</div>
<div style="left:506px;top:206px;width:1px;height:25px;background:#a8a8a8"></div>
<div class="c" style="left:507px;top:206px;width:36px;height:25px;">Art</div>
<div style="left:543px;top:206px;width:1px;height:25px;background:#a8a8a8"></div>
<div class="c x" style="left:544px;top:206px;width:35px;height:25px;">&#215;</div>
<div style="left:579px;top:206px;width:1px;height:25px;background:#a8a8a8"></div>
<div class="c" style="left:580px;top:206px;width:35px;height:25px;">Eng</div>
<div style="left:615px;top:206px;width:1px;height:25px;background:#a8a8a8"></div>
<div class="c g" style="left:616px;top:206px;width:36px;height:25px;"></div>
<div style="left:652px;top:206px;width:1px;height:25px;background:#a8a8a8"></div>
<div class="c" style="left:653px;top:206px;width:35px;height:25px;">Math</div>
<div class="c pe" style="left:689px;top:206px;width:35px;height:25px;">PE</div>
<div style="left:724px;top:206px;width:1px;height:25px;background:#a8a8a8"></div>
<div class="c" style="left:725px;top:206px;width:36px;height:25px;">Sci</div>
<div style="left:761px;top:206px;width:1px;height:25px;background:#a8a8a8"></div>
<div class="c g" style="left:762px;top:206px;width:35px;height:25px;"></div>
<div style="left:797px;top:206px;width:1px;height:25px;background:#a8a8a8"></div>
<div class="c" style="left:798px;top:206px;width:36px;height:25px;">Eng</div>
<div style="left:834px;top:206px;width:1px;height:25px;background:#a8a8a8"></div>
<div class="c" style="left:835px;top:206px;width:35px;height:25px;">SS</div>
<div style="left:870px;top:206px;width:1px;height:25px;background:#a8a8a8"></div>
<div class="c" style="left:871px;top:206px;width:35px;height:25px;">Math</div>
<div class="c mu" style="left:907px;top:206px;width:36px;height:25px;">Mus</div>
<div style="left:943px;top:206px;width:1px;height:25px;background:#a8a8a8"></div>
<div class="c" style="left:944px;top:206px;width:35px;height:25px;">Eng</div>
<div style="left:979px;top:206px;width:1px;height:25px;background:#a8a8a8"></div>
<div class="c pe" style="left:980px;top:206px;width:35px;height:25px;">PE</div>
<div style="left:1015px;top:206px;width:1px;height:25px;background:#a8a8a8"></div>
<div class="c" style="left:1016px;top:206px;width:36px;height:25px;">Math</div>
<div style="left:1052px;top:206px;width:1px;height:25px;background:#a8a8a8"></div>
<div class="c" style="left:1053px;top:206px;width:35px;height:25px;">Sci</div>
<div style="left:1088px;top:206px;width:1px;height:25px;background:#a8a8a8"></div>
<div class="c" style="left:1089px;top:206px;width:35px;height:25px;">SS</div>
<div style="left:5px;top:231px;width:1119px;height:1px;background:#000"></div>
<div class="rh" style="left:6px;top:232px;width:28px;height:25px;">604</div>
<div class="c" style="left:35px;top:232px;width:35px;height:25px;">Eng</div>
<div style="left:70px;top:232px;width:1px;height:25px;background:#a8a8a8"></div>
<div class="c pe" style="left:71px;top:232px;width:35px;height:25px;">PE</div>
<div style="left:106px;top:232px;width:1px;height:25px;background:#a8a8a8"></div>
<div class="c" style="left:107px;top:232px;width:36px;height:25px;">Fre</div>
<div style="left:143px;top:232px;width:1px;height:25px;background:#a8a8a8"></div>
<div class="c" style="left:144px;top:232px;width:35px;height:25px;">SS</div>
<div style="left:179px;top:232px;width:1px;height:25px;background:#a8a8a8"></div>
<div class="c mu" style="left:180px;top:232px;width:35px;height:25px;">Mus</div>
<div style="left:215px;top:232px;width:1px;height:25px;background:#a8a8a8"></div>
<div class="c" style="left:216px;top:232px;width:36px;height:25px;">Math</div>
<div class="c" style="left:253px;top:232px;width:35px;height:25px;">Math</div>
<div style="left:288px;top:232px;width:1px;height:25px;background:#a8a8a8"></div>
<div class="c" style="left:289px;top:232px;width:35px;height:25px;">Sci</div>
<div style="left:324px;top:232px;width:1px;height:25px;background:#a8a8a8"></div>
<div class="c" style="left:325px;top:232px;width:36px;height:25px;">SS</div>
<div style="left:361px;top:232px;width:1px;height:25px;background:#a8a8a8"></div>
<div class="c" style="left:362px;top:232px;width:35px;height:25px;">Comp</div>
<div style="left:397px;top:232px;width:1px;height:25px;background:#a8a8a8"></div>
<div class="c" style="left:398px;top:232px;width:36px;height:25px;">Fre</div>
<div style="left:434px;top:232px;width:1px;height:25px;background:#a8a8a8"></div>
<div class="c" style="left:435px;top:232px;width:35px;height:25px;">Eng</div>
<div class="c" style="left:471px;top:232px;width:35px;height:25px;">SS</div>
<div style="left:506px;top:232px;width:1px;height:25px;background:#a8a8a8"></div>
<div class="c" style="left:507px;top:232px;width:36px;height:25px;">Math</div>
<div style="left:543px;top:232px;width:1px;height:25px;background:#a8a8a8"></div>
<div class="c x" style="left:544px;top:232px;width:35px;height:25px;">&#215;</div>
<div style="left:579px;top:232px;width:1px;height:25px;background:#a8a8a8"></div>
<div class="c mu" style="left:580px;top:232px;width:35px;height:25px;">Mus</div>
<div style="left:615px;top:232px;width:1px;height:25px;background:#a8a8a8"></div>
<div class="c" style="left:616px;top:232px;width:36px;height:25px;">Eng</div>
<div style="left:652px;top:232px;width:1px;height:25px;background:#a8a8a8"></div>
<div class="c pe" style="left:653px;top:232px;width:35px;height:25px;">PE</div>
<div class="c" style="left:689px;top:232px;width:35px;height:25px;">Math</div>
<div style="left:724px;top:232px;width:1px;height:25px;background:#a8a8a8"></div>
<div class="c c2" style="left:725px;top:232px;width:36px;height:25px;padding-left:6px">Sci<br>Tech</div>
<div style="left:761px;top:232px;width:1px;height:25px;background:#a8a8a8"></div>
<div class="c" style="left:762px;top:232px;width:35px;height:25px;">Fre</div>
<div style="left:797px;top:232px;width:1px;height:25px;background:#a8a8a8"></div>
<div class="c" style="left:798px;top:232px;width:36px;height:25px;">Eng</div>
<div style="left:834px;top:232px;width:1px;height:25px;background:#a8a8a8"></div>
<div class="c" style="left:835px;top:232px;width:35px;height:25px;">Art</div>
<div style="left:870px;top:232px;width:1px;height:25px;background:#a8a8a8"></div>
<div class="c" style="left:871px;top:232px;width:35px;height:25px;">Sci</div>
<div class="c" style="left:907px;top:232px;width:36px;height:25px;">Math</div>
<div style="left:943px;top:232px;width:1px;height:25px;background:#a8a8a8"></div>
<div class="c pe" style="left:944px;top:232px;width:35px;height:25px;">PE</div>
<div style="left:979px;top:232px;width:1px;height:25px;background:#a8a8a8"></div>
<div class="c" style="left:980px;top:232px;width:35px;height:25px;">Sci</div>
<div style="left:1015px;top:232px;width:1px;height:25px;background:#a8a8a8"></div>
<div class="c" style="left:1016px;top:232px;width:36px;height:25px;">SS</div>
<div style="left:1052px;top:232px;width:1px;height:25px;background:#a8a8a8"></div>
<div class="c" style="left:1053px;top:232px;width:35px;height:25px;">Eng</div>
<div style="left:1088px;top:232px;width:1px;height:25px;background:#a8a8a8"></div>
<div class="c" style="left:1089px;top:232px;width:35px;height:25px;">Fre</div>
<div style="left:5px;top:257px;width:1119px;height:1px;background:#000"></div>
<div class="rh" style="left:6px;top:258px;width:28px;height:25px;">605<div class="sub">1</div></div>
<div class="c c2" style="left:35px;top:258px;width:35px;height:25px;padding-left:6px">Sci<br>Tech</div>
<div style="left:70px;top:258px;width:1px;height:25px;background:#a8a8a8"></div>
<div class="c" style="left:71px;top:258px;width:35px;height:25px;">Eng</div>
<div style="left:106px;top:258px;width:1px;height:25px;background:#a8a8a8"></div>
<div class="c" style="left:107px;top:258px;width:36px;height:25px;">Math</div>
<div style="left:143px;top:258px;width:1px;height:25px;background:#a8a8a8"></div>
<div class="c" style="left:144px;top:258px;width:35px;height:25px;">SS</div>
<div style="left:179px;top:258px;width:1px;height:25px;background:#a8a8a8"></div>
<div class="c" style="left:180px;top:258px;width:35px;height:25px;">Sci</div>
<div style="left:215px;top:258px;width:1px;height:25px;background:#a8a8a8"></div>
<div class="c pe" style="left:216px;top:258px;width:36px;height:25px;">PE</div>
<div class="c" style="left:253px;top:258px;width:35px;height:25px;">Art</div>
<div style="left:288px;top:258px;width:1px;height:25px;background:#a8a8a8"></div>
<div class="c" style="left:289px;top:258px;width:35px;height:25px;">SS</div>
<div style="left:324px;top:258px;width:1px;height:25px;background:#a8a8a8"></div>
<div class="c" style="left:325px;top:258px;width:36px;height:25px;">Math</div>
<div style="left:361px;top:258px;width:1px;height:25px;background:#a8a8a8"></div>
<div class="c" style="left:362px;top:258px;width:35px;height:25px;">Eng</div>
<div style="left:397px;top:258px;width:1px;height:25px;background:#a8a8a8"></div>
<div class="c" style="left:398px;top:258px;width:36px;height:25px;">Sci</div>
<div style="left:434px;top:258px;width:1px;height:25px;background:#a8a8a8"></div>
<div class="c mu" style="left:435px;top:258px;width:35px;height:25px;">Mus</div>
<div class="c" style="left:471px;top:258px;width:35px;height:25px;">Eng</div>
<div style="left:506px;top:258px;width:1px;height:25px;background:#a8a8a8"></div>
<div class="c pe" style="left:507px;top:258px;width:36px;height:25px;">PE</div>
<div style="left:543px;top:258px;width:1px;height:25px;background:#a8a8a8"></div>
<div class="c x" style="left:544px;top:258px;width:35px;height:25px;">&#215;</div>
<div style="left:579px;top:258px;width:1px;height:25px;background:#a8a8a8"></div>
<div class="c" style="left:580px;top:258px;width:35px;height:25px;">SS</div>
<div style="left:615px;top:258px;width:1px;height:25px;background:#a8a8a8"></div>
<div class="c" style="left:616px;top:258px;width:36px;height:25px;">Math</div>
<div style="left:652px;top:258px;width:1px;height:25px;background:#a8a8a8"></div>
<div class="c" style="left:653px;top:258px;width:35px;height:25px;">Fre</div>
<div class="c" style="left:689px;top:258px;width:35px;height:25px;">Fre</div>
<div style="left:724px;top:258px;width:1px;height:25px;background:#a8a8a8"></div>
<div class="c" style="left:725px;top:258px;width:36px;height:25px;">Comp</div>
<div style="left:761px;top:258px;width:1px;height:25px;background:#a8a8a8"></div>
<div class="c" style="left:762px;top:258px;width:35px;height:25px;">Math</div>
<div style="left:797px;top:258px;width:1px;height:25px;background:#a8a8a8"></div>
<div class="c mu" style="left:798px;top:258px;width:36px;height:25px;">Mus</div>
<div style="left:834px;top:258px;width:1px;height:25px;background:#a8a8a8"></div>
<div class="c" style="left:835px;top:258px;width:35px;height:25px;">Eng</div>
<div style="left:870px;top:258px;width:1px;height:25px;background:#a8a8a8"></div>
<div class="c pe" style="left:871px;top:258px;width:35px;height:25px;">PE</div>
<div class="c" style="left:907px;top:258px;width:36px;height:25px;">SS</div>
<div style="left:943px;top:258px;width:1px;height:25px;background:#a8a8a8"></div>
<div class="c" style="left:944px;top:258px;width:35px;height:25px;">Eng</div>
<div style="left:979px;top:258px;width:1px;height:25px;background:#a8a8a8"></div>
<div class="c" style="left:980px;top:258px;width:35px;height:25px;">Fre</div>
<div style="left:1015px;top:258px;width:1px;height:25px;background:#a8a8a8"></div>
<div class="c" style="left:1016px;top:258px;width:36px;height:25px;">Sci</div>
<div style="left:1052px;top:258px;width:1px;height:25px;background:#a8a8a8"></div>
<div class="c" style="left:1053px;top:258px;width:35px;height:25px;">Math</div>
<div style="left:1088px;top:258px;width:1px;height:25px;background:#a8a8a8"></div>
<div class="c g" style="left:1089px;top:258px;width:35px;height:25px;"></div>
<div style="left:5px;top:283px;width:1119px;height:1px;background:#000"></div>
<div class="rh" style="left:6px;top:284px;width:28px;height:25px;">606<div class="sub">3</div></div>
<div class="c g" style="left:35px;top:284px;width:35px;height:25px;"></div>
<div style="left:70px;top:284px;width:1px;height:25px;background:#a8a8a8"></div>
<div class="c" style="left:71px;top:284px;width:35px;height:25px;">Math</div>
<div style="left:106px;top:284px;width:1px;height:25px;background:#a8a8a8"></div>
<div class="c" style="left:107px;top:284px;width:36px;height:25px;">Sci</div>
<div style="left:143px;top:284px;width:1px;height:25px;background:#a8a8a8"></div>
<div class="c" style="left:144px;top:284px;width:35px;height:25px;">Comp</div>
<div style="left:179px;top:284px;width:1px;height:25px;background:#a8a8a8"></div>
<div class="c" style="left:180px;top:284px;width:35px;height:25px;">Eng</div>
<div style="left:215px;top:284px;width:1px;height:25px;background:#a8a8a8"></div>
<div class="c" style="left:216px;top:284px;width:36px;height:25px;">SS</div>
<div class="c" style="left:253px;top:284px;width:35px;height:25px;">Math</div>
<div style="left:288px;top:284px;width:1px;height:25px;background:#a8a8a8"></div>
<div class="c c2" style="left:289px;top:284px;width:35px;height:25px;padding-left:6px">Sci<br>Tech</div>
<div style="left:324px;top:284px;width:1px;height:25px;background:#a8a8a8"></div>
<div class="c" style="left:325px;top:284px;width:36px;height:25px;">Fre</div>
<div style="left:361px;top:284px;width:1px;height:25px;background:#a8a8a8"></div>
<div class="c g" style="left:362px;top:284px;width:35px;height:25px;"></div>
<div style="left:397px;top:284px;width:1px;height:25px;background:#a8a8a8"></div>
<div class="c pe" style="left:398px;top:284px;width:36px;height:25px;">PE</div>
<div style="left:434px;top:284px;width:1px;height:25px;background:#a8a8a8"></div>
<div class="c" style="left:435px;top:284px;width:35px;height:25px;">Eng</div>
<div class="c mu" style="left:471px;top:284px;width:35px;height:25px;">Mus</div>
<div style="left:506px;top:284px;width:1px;height:25px;background:#a8a8a8"></div>
<div class="c" style="left:507px;top:284px;width:36px;height:25px;">Math</div>
<div style="left:543px;top:284px;width:1px;height:25px;background:#a8a8a8"></div>
<div class="c x" style="left:544px;top:284px;width:35px;height:25px;">&#215;</div>
<div style="left:579px;top:284px;width:1px;height:25px;background:#a8a8a8"></div>
<div class="c" style="left:580px;top:284px;width:35px;height:25px;">Eng</div>
<div style="left:615px;top:284px;width:1px;height:25px;background:#a8a8a8"></div>
<div class="c" style="left:616px;top:284px;width:36px;height:25px;">Sci</div>
<div style="left:652px;top:284px;width:1px;height:25px;background:#a8a8a8"></div>
<div class="c" style="left:653px;top:284px;width:35px;height:25px;">SS</div>
<div class="c pe" style="left:689px;top:284px;width:35px;height:25px;">PE</div>
<div style="left:724px;top:284px;width:1px;height:25px;background:#a8a8a8"></div>
<div class="c" style="left:725px;top:284px;width:36px;height:25px;">SS</div>
<div style="left:761px;top:284px;width:1px;height:25px;background:#a8a8a8"></div>
<div class="c" style="left:762px;top:284px;width:35px;height:25px;">Art</div>
<div style="left:797px;top:284px;width:1px;height:25px;background:#a8a8a8"></div>
<div class="c" style="left:798px;top:284px;width:36px;height:25px;">Eng</div>
<div style="left:834px;top:284px;width:1px;height:25px;background:#a8a8a8"></div>
<div class="c" style="left:835px;top:284px;width:35px;height:25px;">Sci</div>
<div style="left:870px;top:284px;width:1px;height:25px;background:#a8a8a8"></div>
<div class="c" style="left:871px;top:284px;width:35px;height:25px;">Math</div>
<div class="c mu" style="left:907px;top:284px;width:36px;height:25px;">Mus</div>
<div style="left:943px;top:284px;width:1px;height:25px;background:#a8a8a8"></div>
<div class="c" style="left:944px;top:284px;width:35px;height:25px;">SS</div>
<div style="left:979px;top:284px;width:1px;height:25px;background:#a8a8a8"></div>
<div class="c pe" style="left:980px;top:284px;width:35px;height:25px;">PE</div>
<div style="left:1015px;top:284px;width:1px;height:25px;background:#a8a8a8"></div>
<div class="c g" style="left:1016px;top:284px;width:36px;height:25px;"></div>
<div style="left:1052px;top:284px;width:1px;height:25px;background:#a8a8a8"></div>
<div class="c" style="left:1053px;top:284px;width:35px;height:25px;">Math</div>
<div style="left:1088px;top:284px;width:1px;height:25px;background:#a8a8a8"></div>
<div class="c" style="left:1089px;top:284px;width:35px;height:25px;">Eng</div>
<div style="left:5px;top:309px;width:1119px;height:1px;background:#000"></div>
<div class="rh" style="left:6px;top:310px;width:28px;height:25px;">701</div>
<div class="c" style="left:35px;top:310px;width:35px;height:25px;">Geog</div>
<div style="left:70px;top:310px;width:1px;height:25px;background:#a8a8a8"></div>
<div class="c mu" style="left:71px;top:310px;width:35px;height:25px;">Mus</div>
<div style="left:106px;top:310px;width:1px;height:25px;background:#a8a8a8"></div>
<div class="c" style="left:107px;top:310px;width:36px;height:25px;">Eng</div>
<div style="left:143px;top:310px;width:1px;height:25px;background:#a8a8a8"></div>
<div class="c" style="left:144px;top:310px;width:35px;height:25px;">His</div>
<div style="left:179px;top:310px;width:1px;height:25px;background:#a8a8a8"></div>
<div class="c" style="left:180px;top:310px;width:35px;height:25px;">Fre</div>
<div style="left:215px;top:310px;width:1px;height:25px;background:#a8a8a8"></div>
<div class="c" style="left:216px;top:310px;width:36px;height:25px;">Math</div>
<div class="c" style="left:253px;top:310px;width:35px;height:25px;">Eng</div>
<div style="left:288px;top:310px;width:1px;height:25px;background:#a8a8a8"></div>
<div class="c" style="left:289px;top:310px;width:35px;height:25px;">Math</div>
<div style="left:324px;top:310px;width:1px;height:25px;background:#a8a8a8"></div>
<div class="c c2" style="left:325px;top:310px;width:36px;height:25px;padding-left:6px">Sci<br>Tech</div>
<div style="left:361px;top:310px;width:1px;height:25px;background:#a8a8a8"></div>
<div class="c pe" style="left:362px;top:310px;width:35px;height:25px;">PE</div>
<div style="left:397px;top:310px;width:1px;height:25px;background:#a8a8a8"></div>
<div class="c" style="left:398px;top:310px;width:36px;height:25px;">Sci</div>
<div style="left:434px;top:310px;width:1px;height:25px;background:#a8a8a8"></div>
<div class="c" style="left:435px;top:310px;width:35px;height:25px;">Comp</div>
<div class="c" style="left:471px;top:310px;width:35px;height:25px;">Fre</div>
<div style="left:506px;top:310px;width:1px;height:25px;background:#a8a8a8"></div>
<div class="c" style="left:507px;top:310px;width:36px;height:25px;">Math</div>
<div style="left:543px;top:310px;width:1px;height:25px;background:#a8a8a8"></div>
<div class="c x" style="left:544px;top:310px;width:35px;height:25px;">&#215;</div>
<div style="left:579px;top:310px;width:1px;height:25px;background:#a8a8a8"></div>
<div class="c" style="left:580px;top:310px;width:35px;height:25px;">Art</div>
<div style="left:615px;top:310px;width:1px;height:25px;background:#a8a8a8"></div>
<div class="c" style="left:616px;top:310px;width:36px;height:25px;">Geog</div>
<div style="left:652px;top:310px;width:1px;height:25px;background:#a8a8a8"></div>
<div class="c" style="left:653px;top:310px;width:35px;height:25px;">Eng</div>
<div class="c" style="left:689px;top:310px;width:35px;height:25px;">Math</div>
<div style="left:724px;top:310px;width:1px;height:25px;background:#a8a8a8"></div>
<div class="c" style="left:725px;top:310px;width:36px;height:25px;">Eng</div>
<div style="left:761px;top:310px;width:1px;height:25px;background:#a8a8a8"></div>
<div class="c pe" style="left:762px;top:310px;width:35px;height:25px;">PE</div>
<div style="left:797px;top:310px;width:1px;height:25px;background:#a8a8a8"></div>
<div class="c" style="left:798px;top:310px;width:36px;height:25px;">Sci</div>
<div style="left:834px;top:310px;width:1px;height:25px;background:#a8a8a8"></div>
<div class="c mu" style="left:835px;top:310px;width:35px;height:25px;">Mus</div>
<div style="left:870px;top:310px;width:1px;height:25px;background:#a8a8a8"></div>
<div class="c" style="left:871px;top:310px;width:35px;height:25px;">Fre</div>
<div class="c" style="left:907px;top:310px;width:36px;height:25px;">Eng</div>
<div style="left:943px;top:310px;width:1px;height:25px;background:#a8a8a8"></div>
<div class="c" style="left:944px;top:310px;width:35px;height:25px;">Sci</div>
<div style="left:979px;top:310px;width:1px;height:25px;background:#a8a8a8"></div>
<div class="c" style="left:980px;top:310px;width:35px;height:25px;">His</div>
<div style="left:1015px;top:310px;width:1px;height:25px;background:#a8a8a8"></div>
<div class="c" style="left:1016px;top:310px;width:36px;height:25px;">Fre</div>
<div style="left:1052px;top:310px;width:1px;height:25px;background:#a8a8a8"></div>
<div class="c" style="left:1053px;top:310px;width:35px;height:25px;">Math</div>
<div style="left:1088px;top:310px;width:1px;height:25px;background:#a8a8a8"></div>
<div class="c pe" style="left:1089px;top:310px;width:35px;height:25px;">PE</div>
<div style="left:5px;top:335px;width:1119px;height:1px;background:#000"></div>
<div class="rh" style="left:6px;top:336px;width:28px;height:25px;">702</div>
<div class="c" style="left:35px;top:336px;width:35px;height:25px;">Comp</div>
<div style="left:70px;top:336px;width:1px;height:25px;background:#a8a8a8"></div>
<div class="c" style="left:71px;top:336px;width:35px;height:25px;">Fre</div>
<div style="left:106px;top:336px;width:1px;height:25px;background:#a8a8a8"></div>
<div class="c" style="left:107px;top:336px;width:36px;height:25px;">Math</div>
<div style="left:143px;top:336px;width:1px;height:25px;background:#a8a8a8"></div>
<div class="c" style="left:144px;top:336px;width:35px;height:25px;">Eng</div>
<div style="left:179px;top:336px;width:1px;height:25px;background:#a8a8a8"></div>
<div class="c" style="left:180px;top:336px;width:35px;height:25px;">Sci</div>
<div style="left:215px;top:336px;width:1px;height:25px;background:#a8a8a8"></div>
<div class="c mu" style="left:216px;top:336px;width:36px;height:25px;">Mus</div>
<div class="c c2" style="left:253px;top:336px;width:35px;height:25px;padding-left:6px">Sci<br>Tech</div>
<div style="left:288px;top:336px;width:1px;height:25px;background:#a8a8a8"></div>
<div class="c" style="left:289px;top:336px;width:35px;height:25px;">His</div>
<div style="left:324px;top:336px;width:1px;height:25px;background:#a8a8a8"></div>
<div class="c" style="left:325px;top:336px;width:36px;height:25px;">Math</div>
<div style="left:361px;top:336px;width:1px;height:25px;background:#a8a8a8"></div>
<div class="c pe" style="left:362px;top:336px;width:35px;height:25px;">PE</div>
<div style="left:397px;top:336px;width:1px;height:25px;background:#a8a8a8"></div>
<div class="c" style="left:398px;top:336px;width:36px;height:25px;">Fre</div>
<div style="left:434px;top:336px;width:1px;height:25px;background:#a8a8a8"></div>
<div class="c" style="left:435px;top:336px;width:35px;height:25px;">Eng</div>
<div class="c" style="left:471px;top:336px;width:35px;height:25px;">Math</div>
<div style="left:506px;top:336px;width:1px;height:25px;background:#a8a8a8"></div>
<div class="c" style="left:507px;top:336px;width:36px;height:25px;">Fre</div>
<div style="left:543px;top:336px;width:1px;height:25px;background:#a8a8a8"></div>
<div class="c x" style="left:544px;top:336px;width:35px;height:25px;">&#215;</div>
<div style="left:579px;top:336px;width:1px;height:25px;background:#a8a8a8"></div>
<div class="c" style="left:580px;top:336px;width:35px;height:25px;">Sci</div>
<div style="left:615px;top:336px;width:1px;height:25px;background:#a8a8a8"></div>
<div class="c" style="left:616px;top:336px;width:36px;height:25px;">Geog</div>
<div style="left:652px;top:336px;width:1px;height:25px;background:#a8a8a8"></div>
<div class="c" style="left:653px;top:336px;width:35px;height:25px;">Eng</div>
<div class="c" style="left:689px;top:336px;width:35px;height:25px;">Fre</div>
<div style="left:724px;top:336px;width:1px;height:25px;background:#a8a8a8"></div>
<div class="c" style="left:725px;top:336px;width:36px;height:25px;">Math</div>
<div style="left:761px;top:336px;width:1px;height:25px;background:#a8a8a8"></div>
<div class="c pe" style="left:762px;top:336px;width:35px;height:25px;">PE</div>
<div style="left:797px;top:336px;width:1px;height:25px;background:#a8a8a8"></div>
<div class="c" style="left:798px;top:336px;width:36px;height:25px;">His</div>
<div style="left:834px;top:336px;width:1px;height:25px;background:#a8a8a8"></div>
<div class="c" style="left:835px;top:336px;width:35px;height:25px;">Sci</div>
<div style="left:870px;top:336px;width:1px;height:25px;background:#a8a8a8"></div>
<div class="c" style="left:871px;top:336px;width:35px;height:25px;">Eng</div>
<div class="c" style="left:907px;top:336px;width:36px;height:25px;">Eng</div>
<div style="left:943px;top:336px;width:1px;height:25px;background:#a8a8a8"></div>
<div class="c" style="left:944px;top:336px;width:35px;height:25px;">Art</div>
<div style="left:979px;top:336px;width:1px;height:25px;background:#a8a8a8"></div>
<div class="c" style="left:980px;top:336px;width:35px;height:25px;">Math</div>
<div style="left:1015px;top:336px;width:1px;height:25px;background:#a8a8a8"></div>
<div class="c mu" style="left:1016px;top:336px;width:36px;height:25px;">Mus</div>
<div style="left:1052px;top:336px;width:1px;height:25px;background:#a8a8a8"></div>
<div class="c" style="left:1053px;top:336px;width:35px;height:25px;">Geog</div>
<div style="left:1088px;top:336px;width:1px;height:25px;background:#a8a8a8"></div>
<div class="c pe" style="left:1089px;top:336px;width:35px;height:25px;">PE</div>
<div style="left:5px;top:361px;width:1119px;height:1px;background:#000"></div>
<div class="rh" style="left:6px;top:362px;width:28px;height:25px;">703</div>
<div class="c" style="left:35px;top:362px;width:35px;height:25px;">Fre</div>
<div style="left:70px;top:362px;width:1px;height:25px;background:#a8a8a8"></div>
<div class="c" style="left:71px;top:362px;width:35px;height:25px;">Eng</div>
<div style="left:106px;top:362px;width:1px;height:25px;background:#a8a8a8"></div>
<div class="c" style="left:107px;top:362px;width:36px;height:25px;">His</div>
<div style="left:143px;top:362px;width:1px;height:25px;background:#a8a8a8"></div>
<div class="c" style="left:144px;top:362px;width:35px;height:25px;">Math</div>
<div style="left:179px;top:362px;width:1px;height:25px;background:#a8a8a8"></div>
<div class="c" style="left:180px;top:362px;width:35px;height:25px;">Art</div>
<div style="left:215px;top:362px;width:1px;height:25px;background:#a8a8a8"></div>
<div class="c mu" style="left:216px;top:362px;width:36px;height:25px;">Mus</div>
<div class="c" style="left:253px;top:362px;width:35px;height:25px;">Math</div>
<div style="left:288px;top:362px;width:1px;height:25px;background:#a8a8a8"></div>
<div class="c" style="left:289px;top:362px;width:35px;height:25px;">Sci</div>
<div style="left:324px;top:362px;width:1px;height:25px;background:#a8a8a8"></div>
<div class="c" style="left:325px;top:362px;width:36px;height:25px;">Eng</div>
<div style="left:361px;top:362px;width:1px;height:25px;background:#a8a8a8"></div>
<div class="c pe" style="left:362px;top:362px;width:35px;height:25px;">PE</div>
<div style="left:397px;top:362px;width:1px;height:25px;background:#a8a8a8"></div>
<div class="c c2" style="left:398px;top:362px;width:36px;height:25px;padding-left:6px">Sci<br>Tech</div>
<div style="left:434px;top:362px;width:1px;height:25px;background:#a8a8a8"></div>
<div class="c" style="left:435px;top:362px;width:35px;height:25px;">Fre</div>
<div class="c" style="left:471px;top:362px;width:35px;height:25px;">Comp</div>
<div style="left:506px;top:362px;width:1px;height:25px;background:#a8a8a8"></div>
<div class="c" style="left:507px;top:362px;width:36px;height:25px;">Fre</div>
<div style="left:543px;top:362px;width:1px;height:25px;background:#a8a8a8"></div>
<div class="c x" style="left:544px;top:362px;width:35px;height:25px;">&#215;</div>
<div style="left:579px;top:362px;width:1px;height:25px;background:#a8a8a8"></div>
<div class="c" style="left:580px;top:362px;width:35px;height:25px;">Eng</div>
<div style="left:615px;top:362px;width:1px;height:25px;background:#a8a8a8"></div>
<div class="c" style="left:616px;top:362px;width:36px;height:25px;">Math</div>
<div style="left:652px;top:362px;width:1px;height:25px;background:#a8a8a8"></div>
<div class="c" style="left:653px;top:362px;width:35px;height:25px;">Geog</div>
<div class="c" style="left:689px;top:362px;width:35px;height:25px;">Eng</div>
<div style="left:724px;top:362px;width:1px;height:25px;background:#a8a8a8"></div>
<div class="c" style="left:725px;top:362px;width:36px;height:25px;">Sci</div>
<div style="left:761px;top:362px;width:1px;height:25px;background:#a8a8a8"></div>
<div class="c pe" style="left:762px;top:362px;width:35px;height:25px;">PE</div>
<div style="left:797px;top:362px;width:1px;height:25px;background:#a8a8a8"></div>
<div class="c" style="left:798px;top:362px;width:36px;height:25px;">Math</div>
<div style="left:834px;top:362px;width:1px;height:25px;background:#a8a8a8"></div>
<div class="c" style="left:835px;top:362px;width:35px;height:25px;">His</div>
<div style="left:870px;top:362px;width:1px;height:25px;background:#a8a8a8"></div>
<div class="c" style="left:871px;top:362px;width:35px;height:25px;">Fre</div>
<div class="c" style="left:907px;top:362px;width:36px;height:25px;">Math</div>
<div style="left:943px;top:362px;width:1px;height:25px;background:#a8a8a8"></div>
<div class="c" style="left:944px;top:362px;width:35px;height:25px;">Eng</div>
<div style="left:979px;top:362px;width:1px;height:25px;background:#a8a8a8"></div>
<div class="c" style="left:980px;top:362px;width:35px;height:25px;">Geog</div>
<div style="left:1015px;top:362px;width:1px;height:25px;background:#a8a8a8"></div>
<div class="c mu" style="left:1016px;top:362px;width:36px;height:25px;">Mus</div>
<div style="left:1052px;top:362px;width:1px;height:25px;background:#a8a8a8"></div>
<div class="c" style="left:1053px;top:362px;width:35px;height:25px;">Sci</div>
<div style="left:1088px;top:362px;width:1px;height:25px;background:#a8a8a8"></div>
<div class="c pe" style="left:1089px;top:362px;width:35px;height:25px;">PE</div>
<div style="left:5px;top:387px;width:1119px;height:1px;background:#000"></div>
<div class="rh rho" style="left:6px;top:388px;width:28px;height:25px;">704<div class="sub">2</div></div>
<div class="c o" style="left:35px;top:388px;width:35px;height:25px;">PE</div>
<div style="left:70px;top:388px;width:1px;height:25px;background:#a8a8a8"></div>
<div class="c g" style="left:71px;top:388px;width:35px;height:25px;"></div>
<div style="left:106px;top:388px;width:1px;height:25px;background:#a8a8a8"></div>
<div class="c o" style="left:107px;top:388px;width:36px;height:25px;">Math</div>
<div style="left:143px;top:388px;width:1px;height:25px;background:#a8a8a8"></div>
<div class="c" style="left:144px;top:388px;width:35px;height:25px;">Fre</div>
<div style="left:179px;top:388px;width:1px;height:25px;background:#a8a8a8"></div>
<div class="c o" style="left:180px;top:388px;width:35px;height:25px;">Eng</div>
<div style="left:215px;top:388px;width:1px;height:25px;background:#a8a8a8"></div>
<div class="c c2" style="left:216px;top:388px;width:36px;height:25px;padding-left:6px">Sci<br>Tech</div>
<div class="c o" style="left:253px;top:388px;width:35px;height:25px;">Math</div>
<div style="left:288px;top:388px;width:1px;height:25px;background:#a8a8a8"></div>
<div class="c o" style="left:289px;top:388px;width:35px;height:25px;">PE</div>
<div style="left:324px;top:388px;width:1px;height:25px;background:#a8a8a8"></div>
<div class="c o" style="left:325px;top:388px;width:36px;height:25px;">His</div>
<div style="left:361px;top:388px;width:1px;height:25px;background:#a8a8a8"></div>
<div class="c" style="left:362px;top:388px;width:35px;height:25px;">Sci</div>
<div style="left:397px;top:388px;width:1px;height:25px;background:#a8a8a8"></div>
<div class="c" style="left:398px;top:388px;width:36px;height:25px;">Fre</div>
<div style="left:434px;top:388px;width:1px;height:25px;background:#a8a8a8"></div>
<div class="c o" style="left:435px;top:388px;width:35px;height:25px;">Eng</div>
<div class="c g" style="left:471px;top:388px;width:35px;height:25px;"></div>
<div style="left:506px;top:388px;width:1px;height:25px;background:#a8a8a8"></div>
<div class="c o" style="left:507px;top:388px;width:36px;height:25px;">Eng</div>
<div style="left:543px;top:388px;width:1px;height:25px;background:#a8a8a8"></div>
<div class="c x" style="left:544px;top:388px;width:35px;height:25px;">&#215;</div>
<div style="left:579px;top:388px;width:1px;height:25px;background:#a8a8a8"></div>
<div class="c o" style="left:580px;top:388px;width:35px;height:25px;">Geog</div>
<div style="left:615px;top:388px;width:1px;height:25px;background:#a8a8a8"></div>
<div class="c o" style="left:616px;top:388px;width:36px;height:25px;">Math</div>
<div style="left:652px;top:388px;width:1px;height:25px;background:#a8a8a8"></div>
<div class="c" style="left:653px;top:388px;width:35px;height:25px;">Sci</div>
<div class="c o" style="left:689px;top:388px;width:35px;height:25px;">Math</div>
<div style="left:724px;top:388px;width:1px;height:25px;background:#a8a8a8"></div>
<div class="c o" style="left:725px;top:388px;width:36px;height:25px;">His</div>
<div style="left:761px;top:388px;width:1px;height:25px;background:#a8a8a8"></div>
<div class="c" style="left:762px;top:388px;width:35px;height:25px;">Comp</div>
<div style="left:797px;top:388px;width:1px;height:25px;background:#a8a8a8"></div>
<div class="c" style="left:798px;top:388px;width:36px;height:25px;">Fre</div>
<div style="left:834px;top:388px;width:1px;height:25px;background:#a8a8a8"></div>
<div class="c o" style="left:835px;top:388px;width:35px;height:25px;">PE</div>
<div style="left:870px;top:388px;width:1px;height:25px;background:#a8a8a8"></div>
<div class="c" style="left:871px;top:388px;width:35px;height:25px;">Art</div>
<div class="c o" style="left:907px;top:388px;width:36px;height:25px;">Math</div>
<div style="left:943px;top:388px;width:1px;height:25px;background:#a8a8a8"></div>
<div class="c o" style="left:944px;top:388px;width:35px;height:25px;">Geog</div>
<div style="left:979px;top:388px;width:1px;height:25px;background:#a8a8a8"></div>
<div class="c" style="left:980px;top:388px;width:35px;height:25px;">Fre</div>
<div style="left:1015px;top:388px;width:1px;height:25px;background:#a8a8a8"></div>
<div class="c" style="left:1016px;top:388px;width:36px;height:25px;">Sci</div>
<div style="left:1052px;top:388px;width:1px;height:25px;background:#a8a8a8"></div>
<div class="c mu" style="left:1053px;top:388px;width:35px;height:25px;">Mus</div>
<div style="left:1088px;top:388px;width:1px;height:25px;background:#a8a8a8"></div>
<div class="c o" style="left:1089px;top:388px;width:35px;height:25px;">Eng</div>
<div style="left:5px;top:413px;width:1119px;height:1px;background:#000"></div>
<div class="rh rho" style="left:6px;top:414px;width:28px;height:25px;">705<div class="sub">1</div></div>
<div class="c o" style="left:35px;top:414px;width:35px;height:25px;">PE</div>
<div style="left:70px;top:414px;width:1px;height:25px;background:#a8a8a8"></div>
<div class="c o" style="left:71px;top:414px;width:35px;height:25px;">Eng</div>
<div style="left:106px;top:414px;width:1px;height:25px;background:#a8a8a8"></div>
<div class="c" style="left:107px;top:414px;width:36px;height:25px;">Fre</div>
<div style="left:143px;top:414px;width:1px;height:25px;background:#a8a8a8"></div>
<div class="c o" style="left:144px;top:414px;width:35px;height:25px;">His</div>
<div style="left:179px;top:414px;width:1px;height:25px;background:#a8a8a8"></div>
<div class="c" style="left:180px;top:414px;width:35px;height:25px;">Math</div>
<div style="left:215px;top:414px;width:1px;height:25px;background:#a8a8a8"></div>
<div class="c" style="left:216px;top:414px;width:36px;height:25px;">Sci</div>
<div class="c mu" style="left:253px;top:414px;width:35px;height:25px;">Mus</div>
<div style="left:288px;top:414px;width:1px;height:25px;background:#a8a8a8"></div>
<div class="c o" style="left:289px;top:414px;width:35px;height:25px;">PE</div>
<div style="left:324px;top:414px;width:1px;height:25px;background:#a8a8a8"></div>
<div class="c g" style="left:325px;top:414px;width:36px;height:25px;"></div>
<div style="left:361px;top:414px;width:1px;height:25px;background:#a8a8a8"></div>
<div class="c o" style="left:362px;top:414px;width:35px;height:25px;">Eng</div>
<div style="left:397px;top:414px;width:1px;height:25px;background:#a8a8a8"></div>
<div class="c o" style="left:398px;top:414px;width:36px;height:25px;">Geog</div>
<div style="left:434px;top:414px;width:1px;height:25px;background:#a8a8a8"></div>
<div class="c" style="left:435px;top:414px;width:35px;height:25px;">Math</div>
<div class="c o" style="left:471px;top:414px;width:35px;height:25px;">Eng</div>
<div style="left:506px;top:414px;width:1px;height:25px;background:#a8a8a8"></div>
<div class="c" style="left:507px;top:414px;width:36px;height:25px;">Sci</div>
<div style="left:543px;top:414px;width:1px;height:25px;background:#a8a8a8"></div>
<div class="c x" style="left:544px;top:414px;width:35px;height:25px;">&#215;</div>
<div style="left:579px;top:414px;width:1px;height:25px;background:#a8a8a8"></div>
<div class="c" style="left:580px;top:414px;width:35px;height:25px;">Math</div>
<div style="left:615px;top:414px;width:1px;height:25px;background:#a8a8a8"></div>
<div class="c" style="left:616px;top:414px;width:36px;height:25px;">Fre</div>
<div style="left:652px;top:414px;width:1px;height:25px;background:#a8a8a8"></div>
<div class="c c2" style="left:653px;top:414px;width:35px;height:25px;padding-left:6px">Sci<br>Tech</div>
<div class="c" style="left:689px;top:414px;width:35px;height:25px;">Sci</div>
<div style="left:724px;top:414px;width:1px;height:25px;background:#a8a8a8"></div>
<div class="c mu" style="left:725px;top:414px;width:36px;height:25px;">Mus</div>
<div style="left:761px;top:414px;width:1px;height:25px;background:#a8a8a8"></div>
<div class="c" style="left:762px;top:414px;width:35px;height:25px;">Math</div>
<div style="left:797px;top:414px;width:1px;height:25px;background:#a8a8a8"></div>
<div class="c o" style="left:798px;top:414px;width:36px;height:25px;">Eng</div>
<div style="left:834px;top:414px;width:1px;height:25px;background:#a8a8a8"></div>
<div class="c o" style="left:835px;top:414px;width:35px;height:25px;">PE</div>
<div style="left:870px;top:414px;width:1px;height:25px;background:#a8a8a8"></div>
<div class="c o" style="left:871px;top:414px;width:35px;height:25px;">Geog</div>
<div class="c" style="left:907px;top:414px;width:36px;height:25px;">Fre</div>
<div style="left:943px;top:414px;width:1px;height:25px;background:#a8a8a8"></div>
<div class="c" style="left:944px;top:414px;width:35px;height:25px;">Math</div>
<div style="left:979px;top:414px;width:1px;height:25px;background:#a8a8a8"></div>
<div class="c o" style="left:980px;top:414px;width:35px;height:25px;">His</div>
<div style="left:1015px;top:414px;width:1px;height:25px;background:#a8a8a8"></div>
<div class="c" style="left:1016px;top:414px;width:36px;height:25px;">Art</div>
<div style="left:1052px;top:414px;width:1px;height:25px;background:#a8a8a8"></div>
<div class="c o" style="left:1053px;top:414px;width:35px;height:25px;">Eng</div>
<div style="left:1088px;top:414px;width:1px;height:25px;background:#a8a8a8"></div>
<div class="c" style="left:1089px;top:414px;width:35px;height:25px;">Comp</div>
<div style="left:5px;top:439px;width:1119px;height:1px;background:#000"></div>
<div class="rh" style="left:6px;top:440px;width:28px;height:25px;">706<div class="sub">1</div></div>
<div class="c" style="left:35px;top:440px;width:35px;height:25px;">Sci</div>
<div style="left:70px;top:440px;width:1px;height:25px;background:#a8a8a8"></div>
<div class="c" style="left:71px;top:440px;width:35px;height:25px;">Math</div>
<div style="left:106px;top:440px;width:1px;height:25px;background:#a8a8a8"></div>
<div class="c" style="left:107px;top:440px;width:36px;height:25px;">Geog</div>
<div style="left:143px;top:440px;width:1px;height:25px;background:#a8a8a8"></div>
<div class="c" style="left:144px;top:440px;width:35px;height:25px;">Eng</div>
<div style="left:179px;top:440px;width:1px;height:25px;background:#a8a8a8"></div>
<div class="c pe" style="left:180px;top:440px;width:35px;height:25px;">PE</div>
<div style="left:215px;top:440px;width:1px;height:25px;background:#a8a8a8"></div>
<div class="c" style="left:216px;top:440px;width:36px;height:25px;">Fre</div>
<div class="c" style="left:253px;top:440px;width:35px;height:25px;">Sci</div>
<div style="left:288px;top:440px;width:1px;height:25px;background:#a8a8a8"></div>
<div class="c" style="left:289px;top:440px;width:35px;height:25px;">Eng</div>
<div style="left:324px;top:440px;width:1px;height:25px;background:#a8a8a8"></div>
<div class="c" style="left:325px;top:440px;width:36px;height:25px;">His</div>
<div style="left:361px;top:440px;width:1px;height:25px;background:#a8a8a8"></div>
<div class="c" style="left:362px;top:440px;width:35px;height:25px;">Art</div>
<div style="left:397px;top:440px;width:1px;height:25px;background:#a8a8a8"></div>
<div class="c" style="left:398px;top:440px;width:36px;height:25px;">Math</div>
<div style="left:434px;top:440px;width:1px;height:25px;background:#a8a8a8"></div>
<div class="c" style="left:435px;top:440px;width:35px;height:25px;">Fre</div>
<div class="c pe" style="left:471px;top:440px;width:35px;height:25px;">PE</div>
<div style="left:506px;top:440px;width:1px;height:25px;background:#a8a8a8"></div>
<div class="c" style="left:507px;top:440px;width:36px;height:25px;">Geog</div>
<div style="left:543px;top:440px;width:1px;height:25px;background:#a8a8a8"></div>
<div class="c x" style="left:544px;top:440px;width:35px;height:25px;">&#215;</div>
<div style="left:579px;top:440px;width:1px;height:25px;background:#a8a8a8"></div>
<div class="c" style="left:580px;top:440px;width:35px;height:25px;">Comp</div>
<div style="left:615px;top:440px;width:1px;height:25px;background:#a8a8a8"></div>
<div class="c" style="left:616px;top:440px;width:36px;height:25px;">Eng</div>
<div style="left:652px;top:440px;width:1px;height:25px;background:#a8a8a8"></div>
<div class="c" style="left:653px;top:440px;width:35px;height:25px;">Math</div>
<div class="c" style="left:689px;top:440px;width:35px;height:25px;">Eng</div>
<div style="left:724px;top:440px;width:1px;height:25px;background:#a8a8a8"></div>
<div class="c pe" style="left:725px;top:440px;width:36px;height:25px;">PE</div>
<div style="left:761px;top:440px;width:1px;height:25px;background:#a8a8a8"></div>
<div class="c" style="left:762px;top:440px;width:35px;height:25px;">Sci</div>
<div style="left:797px;top:440px;width:1px;height:25px;background:#a8a8a8"></div>
<div class="c" style="left:798px;top:440px;width:36px;height:25px;">Fre</div>
<div style="left:834px;top:440px;width:1px;height:25px;background:#a8a8a8"></div>
<div class="c g" style="left:835px;top:440px;width:35px;height:25px;"></div>
<div style="left:870px;top:440px;width:1px;height:25px;background:#a8a8a8"></div>
<div class="c" style="left:871px;top:440px;width:35px;height:25px;">Math</div>
<div class="c" style="left:907px;top:440px;width:36px;height:25px;">Eng</div>
<div style="left:943px;top:440px;width:1px;height:25px;background:#a8a8a8"></div>
<div class="c" style="left:944px;top:440px;width:35px;height:25px;">His</div>
<div style="left:979px;top:440px;width:1px;height:25px;background:#a8a8a8"></div>
<div class="c c2" style="left:980px;top:440px;width:35px;height:25px;padding-left:6px">Sci<br>Tech</div>
<div style="left:1015px;top:440px;width:1px;height:25px;background:#a8a8a8"></div>
<div class="c" style="left:1016px;top:440px;width:36px;height:25px;">Math</div>
<div style="left:1052px;top:440px;width:1px;height:25px;background:#a8a8a8"></div>
<div class="c mu" style="left:1053px;top:440px;width:35px;height:25px;">Mus</div>
<div style="left:1088px;top:440px;width:1px;height:25px;background:#a8a8a8"></div>
<div class="c" style="left:1089px;top:440px;width:35px;height:25px;">Fre</div>
<div style="left:5px;top:465px;width:1119px;height:1px;background:#000"></div>
<div class="rh rho" style="left:6px;top:466px;width:28px;height:25px;">707<div class="sub">5</div></div>
<div class="c o" style="left:35px;top:466px;width:35px;height:25px;">PE</div>
<div style="left:70px;top:466px;width:1px;height:25px;background:#a8a8a8"></div>
<div class="c" style="left:71px;top:466px;width:35px;height:25px;">Math</div>
<div style="left:106px;top:466px;width:1px;height:25px;background:#a8a8a8"></div>
<div class="c" style="left:107px;top:466px;width:36px;height:25px;">Sci</div>
<div style="left:143px;top:466px;width:1px;height:25px;background:#a8a8a8"></div>
<div class="c" style="left:144px;top:466px;width:35px;height:25px;">Eng</div>
<div style="left:179px;top:466px;width:1px;height:25px;background:#a8a8a8"></div>
<div class="c g" style="left:180px;top:466px;width:35px;height:25px;"></div>
<div style="left:215px;top:466px;width:1px;height:25px;background:#a8a8a8"></div>
<div class="c o" style="left:216px;top:466px;width:36px;height:25px;">His</div>
<div class="c mu" style="left:253px;top:466px;width:35px;height:25px;">Mus</div>
<div style="left:288px;top:466px;width:1px;height:25px;background:#a8a8a8"></div>
<div class="c o" style="left:289px;top:466px;width:35px;height:25px;">PE</div>
<div style="left:324px;top:466px;width:1px;height:25px;background:#a8a8a8"></div>
<div class="c" style="left:325px;top:466px;width:36px;height:25px;">Math</div>
<div style="left:361px;top:466px;width:1px;height:25px;background:#a8a8a8"></div>
<div class="c" style="left:362px;top:466px;width:35px;height:25px;">Eng</div>
<div style="left:397px;top:466px;width:1px;height:25px;background:#a8a8a8"></div>
<div class="c g" style="left:398px;top:466px;width:36px;height:25px;"></div>
<div style="left:434px;top:466px;width:1px;height:25px;background:#a8a8a8"></div>
<div class="c" style="left:435px;top:466px;width:35px;height:25px;">Sci</div>
<div class="c" style="left:471px;top:466px;width:35px;height:25px;">Math</div>
<div style="left:506px;top:466px;width:1px;height:25px;background:#a8a8a8"></div>
<div class="c g" style="left:507px;top:466px;width:36px;height:25px;"></div>
<div style="left:543px;top:466px;width:1px;height:25px;background:#a8a8a8"></div>
<div class="c x" style="left:544px;top:466px;width:35px;height:25px;">&#215;</div>
<div style="left:579px;top:466px;width:1px;height:25px;background:#a8a8a8"></div>
<div class="c" style="left:580px;top:466px;width:35px;height:25px;">Eng</div>
<div style="left:615px;top:466px;width:1px;height:25px;background:#a8a8a8"></div>
<div class="c c2" style="left:616px;top:466px;width:36px;height:25px;padding-left:6px">Sci<br>Tech</div>
<div style="left:652px;top:466px;width:1px;height:25px;background:#a8a8a8"></div>
<div class="c o" style="left:653px;top:466px;width:35px;height:25px;">Geog</div>
<div class="c g" style="left:689px;top:466px;width:35px;height:25px;"></div>
<div style="left:724px;top:466px;width:1px;height:25px;background:#a8a8a8"></div>
<div class="c mu" style="left:725px;top:466px;width:36px;height:25px;">Mus</div>
<div style="left:761px;top:466px;width:1px;height:25px;background:#a8a8a8"></div>
<div class="c o" style="left:762px;top:466px;width:35px;height:25px;">His</div>
<div style="left:797px;top:466px;width:1px;height:25px;background:#a8a8a8"></div>
<div class="c" style="left:798px;top:466px;width:36px;height:25px;">Art</div>
<div style="left:834px;top:466px;width:1px;height:25px;background:#a8a8a8"></div>
<div class="c o" style="left:835px;top:466px;width:35px;height:25px;">PE</div>
<div style="left:870px;top:466px;width:1px;height:25px;background:#a8a8a8"></div>
<div class="c" style="left:871px;top:466px;width:35px;height:25px;">Math</div>
<div class="c" style="left:907px;top:466px;width:36px;height:25px;">Comp</div>
<div style="left:943px;top:466px;width:1px;height:25px;background:#a8a8a8"></div>
<div class="c g" style="left:944px;top:466px;width:35px;height:25px;"></div>
<div style="left:979px;top:466px;width:1px;height:25px;background:#a8a8a8"></div>
<div class="c" style="left:980px;top:466px;width:35px;height:25px;">Sci</div>
<div style="left:1015px;top:466px;width:1px;height:25px;background:#a8a8a8"></div>
<div class="c o" style="left:1016px;top:466px;width:36px;height:25px;">Geog</div>
<div style="left:1052px;top:466px;width:1px;height:25px;background:#a8a8a8"></div>
<div class="c" style="left:1053px;top:466px;width:35px;height:25px;">Eng</div>
<div style="left:1088px;top:466px;width:1px;height:25px;background:#a8a8a8"></div>
<div class="c" style="left:1089px;top:466px;width:35px;height:25px;">Math</div>
<div style="left:5px;top:491px;width:1119px;height:1px;background:#000"></div>
<div class="rh" style="left:6px;top:492px;width:28px;height:25px;">801</div>
<div class="c" style="left:35px;top:492px;width:35px;height:25px;">Math</div>
<div style="left:70px;top:492px;width:1px;height:25px;background:#a8a8a8"></div>
<div class="c" style="left:71px;top:492px;width:35px;height:25px;">Sci</div>
<div style="left:106px;top:492px;width:1px;height:25px;background:#a8a8a8"></div>
<div class="c pe" style="left:107px;top:492px;width:36px;height:25px;">PE</div>
<div style="left:143px;top:492px;width:1px;height:25px;background:#a8a8a8"></div>
<div class="c" style="left:144px;top:492px;width:35px;height:25px;">His</div>
<div style="left:179px;top:492px;width:1px;height:25px;background:#a8a8a8"></div>
<div class="c" style="left:180px;top:492px;width:35px;height:25px;">Eng</div>
<div style="left:215px;top:492px;width:1px;height:25px;background:#a8a8a8"></div>
<div class="c" style="left:216px;top:492px;width:36px;height:25px;">Art</div>
<div class="c" style="left:253px;top:492px;width:35px;height:25px;">Math</div>
<div style="left:288px;top:492px;width:1px;height:25px;background:#a8a8a8"></div>
<div class="c" style="left:289px;top:492px;width:35px;height:25px;">Geog</div>
<div style="left:324px;top:492px;width:1px;height:25px;background:#a8a8a8"></div>
<div class="c" style="left:325px;top:492px;width:36px;height:25px;">Sci</div>
<div style="left:361px;top:492px;width:1px;height:25px;background:#a8a8a8"></div>
<div class="c mu" style="left:362px;top:492px;width:35px;height:25px;">Mus</div>
<div style="left:397px;top:492px;width:1px;height:25px;background:#a8a8a8"></div>
<div class="c" style="left:398px;top:492px;width:36px;height:25px;">Fre</div>
<div style="left:434px;top:492px;width:1px;height:25px;background:#a8a8a8"></div>
<div class="c" style="left:435px;top:492px;width:35px;height:25px;">Eng</div>
<div class="c" style="left:471px;top:492px;width:35px;height:25px;">Math</div>
<div style="left:506px;top:492px;width:1px;height:25px;background:#a8a8a8"></div>
<div class="c" style="left:507px;top:492px;width:36px;height:25px;">Fre</div>
<div style="left:543px;top:492px;width:1px;height:25px;background:#a8a8a8"></div>
<div class="c x" style="left:544px;top:492px;width:35px;height:25px;">&#215;</div>
<div style="left:579px;top:492px;width:1px;height:25px;background:#a8a8a8"></div>
<div class="c" style="left:580px;top:492px;width:35px;height:25px;">Eng</div>
<div style="left:615px;top:492px;width:1px;height:25px;background:#a8a8a8"></div>
<div class="c pe" style="left:616px;top:492px;width:36px;height:25px;">PE</div>
<div style="left:652px;top:492px;width:1px;height:25px;background:#a8a8a8"></div>
<div class="c" style="left:653px;top:492px;width:35px;height:25px;">His</div>
<div class="c mu" style="left:689px;top:492px;width:35px;height:25px;">Mus</div>
<div style="left:724px;top:492px;width:1px;height:25px;background:#a8a8a8"></div>
<div class="c" style="left:725px;top:492px;width:36px;height:25px;">Math</div>
<div style="left:761px;top:492px;width:1px;height:25px;background:#a8a8a8"></div>
<div class="c" style="left:762px;top:492px;width:35px;height:25px;">Fre</div>
<div style="left:797px;top:492px;width:1px;height:25px;background:#a8a8a8"></div>
<div class="c pe" style="left:798px;top:492px;width:36px;height:25px;">PE</div>
<div style="left:834px;top:492px;width:1px;height:25px;background:#a8a8a8"></div>
<div class="c" style="left:835px;top:492px;width:35px;height:25px;">Geog</div>
<div style="left:870px;top:492px;width:1px;height:25px;background:#a8a8a8"></div>
<div class="c" style="left:871px;top:492px;width:35px;height:25px;">Eng</div>
<div class="c" style="left:907px;top:492px;width:36px;height:25px;">Sci</div>
<div style="left:943px;top:492px;width:1px;height:25px;background:#a8a8a8"></div>
<div class="c" style="left:944px;top:492px;width:35px;height:25px;">Math</div>
<div style="left:979px;top:492px;width:1px;height:25px;background:#a8a8a8"></div>
<div class="c" style="left:980px;top:492px;width:35px;height:25px;">Comp</div>
<div style="left:1015px;top:492px;width:1px;height:25px;background:#a8a8a8"></div>
<div class="c" style="left:1016px;top:492px;width:36px;height:25px;">Fre</div>
<div style="left:1052px;top:492px;width:1px;height:25px;background:#a8a8a8"></div>
<div class="c" style="left:1053px;top:492px;width:35px;height:25px;">Eng</div>
<div style="left:1088px;top:492px;width:1px;height:25px;background:#a8a8a8"></div>
<div class="c c2" style="left:1089px;top:492px;width:35px;height:25px;padding-left:6px">Sci<br>Tech</div>
<div style="left:5px;top:517px;width:1119px;height:1px;background:#000"></div>
<div class="rh" style="left:6px;top:518px;width:28px;height:25px;">802</div>
<div class="c" style="left:35px;top:518px;width:35px;height:25px;">Sci</div>
<div style="left:70px;top:518px;width:1px;height:25px;background:#a8a8a8"></div>
<div class="c" style="left:71px;top:518px;width:35px;height:25px;">Geog</div>
<div style="left:106px;top:518px;width:1px;height:25px;background:#a8a8a8"></div>
<div class="c pe" style="left:107px;top:518px;width:36px;height:25px;">PE</div>
<div style="left:143px;top:518px;width:1px;height:25px;background:#a8a8a8"></div>
<div class="c" style="left:144px;top:518px;width:35px;height:25px;">Fre</div>
<div style="left:179px;top:518px;width:1px;height:25px;background:#a8a8a8"></div>
<div class="c" style="left:180px;top:518px;width:35px;height:25px;">Math</div>
<div style="left:215px;top:518px;width:1px;height:25px;background:#a8a8a8"></div>
<div class="c" style="left:216px;top:518px;width:36px;height:25px;">Eng</div>
<div class="c" style="left:253px;top:518px;width:35px;height:25px;">His</div>
<div style="left:288px;top:518px;width:1px;height:25px;background:#a8a8a8"></div>
<div class="c" style="left:289px;top:518px;width:35px;height:25px;">Math</div>
<div style="left:324px;top:518px;width:1px;height:25px;background:#a8a8a8"></div>
<div class="c" style="left:325px;top:518px;width:36px;height:25px;">Fre</div>
<div style="left:361px;top:518px;width:1px;height:25px;background:#a8a8a8"></div>
<div class="c mu" style="left:362px;top:518px;width:35px;height:25px;">Mus</div>
<div style="left:397px;top:518px;width:1px;height:25px;background:#a8a8a8"></div>
<div class="c" style="left:398px;top:518px;width:36px;height:25px;">Eng</div>
<div style="left:434px;top:518px;width:1px;height:25px;background:#a8a8a8"></div>
<div class="c" style="left:435px;top:518px;width:35px;height:25px;">Art</div>
<div class="c" style="left:471px;top:518px;width:35px;height:25px;">Sci</div>
<div style="left:506px;top:518px;width:1px;height:25px;background:#a8a8a8"></div>
<div class="c" style="left:507px;top:518px;width:36px;height:25px;">Eng</div>
<div style="left:543px;top:518px;width:1px;height:25px;background:#a8a8a8"></div>
<div class="c x" style="left:544px;top:518px;width:35px;height:25px;">&#215;</div>
<div style="left:579px;top:518px;width:1px;height:25px;background:#a8a8a8"></div>
<div class="c" style="left:580px;top:518px;width:35px;height:25px;">Math</div>
<div style="left:615px;top:518px;width:1px;height:25px;background:#a8a8a8"></div>
<div class="c pe" style="left:616px;top:518px;width:36px;height:25px;">PE</div>
<div style="left:652px;top:518px;width:1px;height:25px;background:#a8a8a8"></div>
<div class="c" style="left:653px;top:518px;width:35px;height:25px;">Fre</div>
<div class="c mu" style="left:689px;top:518px;width:35px;height:25px;">Mus</div>
<div style="left:724px;top:518px;width:1px;height:25px;background:#a8a8a8"></div>
<div class="c" style="left:725px;top:518px;width:36px;height:25px;">Math</div>
<div style="left:761px;top:518px;width:1px;height:25px;background:#a8a8a8"></div>
<div class="c" style="left:762px;top:518px;width:35px;height:25px;">Eng</div>
<div style="left:797px;top:518px;width:1px;height:25px;background:#a8a8a8"></div>
<div class="c pe" style="left:798px;top:518px;width:36px;height:25px;">PE</div>
<div style="left:834px;top:518px;width:1px;height:25px;background:#a8a8a8"></div>
<div class="c" style="left:835px;top:518px;width:35px;height:25px;">Sci</div>
<div style="left:870px;top:518px;width:1px;height:25px;background:#a8a8a8"></div>
<div class="c c2" style="left:871px;top:518px;width:35px;height:25px;padding-left:6px">Sci<br>Tech</div>
<div class="c" style="left:907px;top:518px;width:36px;height:25px;">Fre</div>
<div style="left:943px;top:518px;width:1px;height:25px;background:#a8a8a8"></div>
<div class="c" style="left:944px;top:518px;width:35px;height:25px;">Geog</div>
<div style="left:979px;top:518px;width:1px;height:25px;background:#a8a8a8"></div>
<div class="c" style="left:980px;top:518px;width:35px;height:25px;">Eng</div>
<div style="left:1015px;top:518px;width:1px;height:25px;background:#a8a8a8"></div>
<div class="c" style="left:1016px;top:518px;width:36px;height:25px;">His</div>
<div style="left:1052px;top:518px;width:1px;height:25px;background:#a8a8a8"></div>
<div class="c" style="left:1053px;top:518px;width:35px;height:25px;">Comp</div>
<div style="left:1088px;top:518px;width:1px;height:25px;background:#a8a8a8"></div>
<div class="c" style="left:1089px;top:518px;width:35px;height:25px;">Math</div>
<div style="left:5px;top:543px;width:1119px;height:1px;background:#000"></div>
<div class="rh" style="left:6px;top:544px;width:28px;height:25px;">803</div>
<div class="c" style="left:35px;top:544px;width:35px;height:25px;">His</div>
<div style="left:70px;top:544px;width:1px;height:25px;background:#a8a8a8"></div>
<div class="c" style="left:71px;top:544px;width:35px;height:25px;">Math</div>
<div style="left:106px;top:544px;width:1px;height:25px;background:#a8a8a8"></div>
<div class="c" style="left:107px;top:544px;width:36px;height:25px;">Geog</div>
<div style="left:143px;top:544px;width:1px;height:25px;background:#a8a8a8"></div>
<div class="c pe" style="left:144px;top:544px;width:35px;height:25px;">PE</div>
<div style="left:179px;top:544px;width:1px;height:25px;background:#a8a8a8"></div>
<div class="c" style="left:180px;top:544px;width:35px;height:25px;">Eng</div>
<div style="left:215px;top:544px;width:1px;height:25px;background:#a8a8a8"></div>
<div class="c" style="left:216px;top:544px;width:36px;height:25px;">Fre</div>
<div class="c" style="left:253px;top:544px;width:35px;height:25px;">Sci</div>
<div style="left:288px;top:544px;width:1px;height:25px;background:#a8a8a8"></div>
<div class="c mu" style="left:289px;top:544px;width:35px;height:25px;">Mus</div>
<div style="left:324px;top:544px;width:1px;height:25px;background:#a8a8a8"></div>
<div class="c" style="left:325px;top:544px;width:36px;height:25px;">Eng</div>
<div style="left:361px;top:544px;width:1px;height:25px;background:#a8a8a8"></div>
<div class="c c2" style="left:362px;top:544px;width:35px;height:25px;padding-left:6px">Sci<br>Tech</div>
<div style="left:397px;top:544px;width:1px;height:25px;background:#a8a8a8"></div>
<div class="c" style="left:398px;top:544px;width:36px;height:25px;">Math</div>
<div style="left:434px;top:544px;width:1px;height:25px;background:#a8a8a8"></div>
<div class="c pe" style="left:435px;top:544px;width:35px;height:25px;">PE</div>
<div class="c" style="left:471px;top:544px;width:35px;height:25px;">Geog</div>
<div style="left:506px;top:544px;width:1px;height:25px;background:#a8a8a8"></div>
<div class="c" style="left:507px;top:544px;width:36px;height:25px;">Eng</div>
<div style="left:543px;top:544px;width:1px;height:25px;background:#a8a8a8"></div>
<div class="c x" style="left:544px;top:544px;width:35px;height:25px;">&#215;</div>
<div style="left:579px;top:544px;width:1px;height:25px;background:#a8a8a8"></div>
<div class="c" style="left:580px;top:544px;width:35px;height:25px;">Fre</div>
<div style="left:615px;top:544px;width:1px;height:25px;background:#a8a8a8"></div>
<div class="c" style="left:616px;top:544px;width:36px;height:25px;">Comp</div>
<div style="left:652px;top:544px;width:1px;height:25px;background:#a8a8a8"></div>
<div class="c" style="left:653px;top:544px;width:35px;height:25px;">Math</div>
<div class="c" style="left:689px;top:544px;width:35px;height:25px;">Eng</div>
<div style="left:724px;top:544px;width:1px;height:25px;background:#a8a8a8"></div>
<div class="c" style="left:725px;top:544px;width:36px;height:25px;">Art</div>
<div style="left:761px;top:544px;width:1px;height:25px;background:#a8a8a8"></div>
<div class="c mu" style="left:762px;top:544px;width:35px;height:25px;">Mus</div>
<div style="left:797px;top:544px;width:1px;height:25px;background:#a8a8a8"></div>
<div class="c" style="left:798px;top:544px;width:36px;height:25px;">Fre</div>
<div style="left:834px;top:544px;width:1px;height:25px;background:#a8a8a8"></div>
<div class="c" style="left:835px;top:544px;width:35px;height:25px;">Math</div>
<div style="left:870px;top:544px;width:1px;height:25px;background:#a8a8a8"></div>
<div class="c" style="left:871px;top:544px;width:35px;height:25px;">Sci</div>
<div class="c pe" style="left:907px;top:544px;width:36px;height:25px;">PE</div>
<div style="left:943px;top:544px;width:1px;height:25px;background:#a8a8a8"></div>
<div class="c" style="left:944px;top:544px;width:35px;height:25px;">Sci</div>
<div style="left:979px;top:544px;width:1px;height:25px;background:#a8a8a8"></div>
<div class="c" style="left:980px;top:544px;width:35px;height:25px;">Fre</div>
<div style="left:1015px;top:544px;width:1px;height:25px;background:#a8a8a8"></div>
<div class="c" style="left:1016px;top:544px;width:36px;height:25px;">Eng</div>
<div style="left:1052px;top:544px;width:1px;height:25px;background:#a8a8a8"></div>
<div class="c" style="left:1053px;top:544px;width:35px;height:25px;">His</div>
<div style="left:1088px;top:544px;width:1px;height:25px;background:#a8a8a8"></div>
<div class="c" style="left:1089px;top:544px;width:35px;height:25px;">Math</div>
<div style="left:5px;top:569px;width:1119px;height:1px;background:#000"></div>
<div class="rh" style="left:6px;top:570px;width:28px;height:25px;">804</div>
<div class="c" style="left:35px;top:570px;width:35px;height:25px;">Geog</div>
<div style="left:70px;top:570px;width:1px;height:25px;background:#a8a8a8"></div>
<div class="c" style="left:71px;top:570px;width:35px;height:25px;">Math</div>
<div style="left:106px;top:570px;width:1px;height:25px;background:#a8a8a8"></div>
<div class="c" style="left:107px;top:570px;width:36px;height:25px;">Fre</div>
<div style="left:143px;top:570px;width:1px;height:25px;background:#a8a8a8"></div>
<div class="c" style="left:144px;top:570px;width:35px;height:25px;">Eng</div>
<div style="left:179px;top:570px;width:1px;height:25px;background:#a8a8a8"></div>
<div class="c c2" style="left:180px;top:570px;width:35px;height:25px;padding-left:6px">Sci<br>Tech</div>
<div style="left:215px;top:570px;width:1px;height:25px;background:#a8a8a8"></div>
<div class="c" style="left:216px;top:570px;width:36px;height:25px;">Sci</div>
<div class="c" style="left:253px;top:570px;width:35px;height:25px;">Math</div>
<div style="left:288px;top:570px;width:1px;height:25px;background:#a8a8a8"></div>
<div class="c" style="left:289px;top:570px;width:35px;height:25px;">His</div>
<div style="left:324px;top:570px;width:1px;height:25px;background:#a8a8a8"></div>
<div class="c pe" style="left:325px;top:570px;width:36px;height:25px;">PE</div>
<div style="left:361px;top:570px;width:1px;height:25px;background:#a8a8a8"></div>
<div class="c" style="left:362px;top:570px;width:35px;height:25px;">Eng</div>
<div style="left:397px;top:570px;width:1px;height:25px;background:#a8a8a8"></div>
<div class="c mu" style="left:398px;top:570px;width:36px;height:25px;">Mus</div>
<div style="left:434px;top:570px;width:1px;height:25px;background:#a8a8a8"></div>
<div class="c" style="left:435px;top:570px;width:35px;height:25px;">Fre</div>
<div class="c" style="left:471px;top:570px;width:35px;height:25px;">Math</div>
<div style="left:506px;top:570px;width:1px;height:25px;background:#a8a8a8"></div>
<div class="c" style="left:507px;top:570px;width:36px;height:25px;">Sci</div>
<div style="left:543px;top:570px;width:1px;height:25px;background:#a8a8a8"></div>
<div class="c x" style="left:544px;top:570px;width:35px;height:25px;">&#215;</div>
<div style="left:579px;top:570px;width:1px;height:25px;background:#a8a8a8"></div>
<div class="c pe" style="left:580px;top:570px;width:35px;height:25px;">PE</div>
<div style="left:615px;top:570px;width:1px;height:25px;background:#a8a8a8"></div>
<div class="c" style="left:616px;top:570px;width:36px;height:25px;">Eng</div>
<div style="left:652px;top:570px;width:1px;height:25px;background:#a8a8a8"></div>
<div class="c" style="left:653px;top:570px;width:35px;height:25px;">Art</div>
<div class="c" style="left:689px;top:570px;width:35px;height:25px;">Fre</div>
<div style="left:724px;top:570px;width:1px;height:25px;background:#a8a8a8"></div>
<div class="c" style="left:725px;top:570px;width:36px;height:25px;">Eng</div>
<div style="left:761px;top:570px;width:1px;height:25px;background:#a8a8a8"></div>
<div class="c" style="left:762px;top:570px;width:35px;height:25px;">Math</div>
<div style="left:797px;top:570px;width:1px;height:25px;background:#a8a8a8"></div>
<div class="c" style="left:798px;top:570px;width:36px;height:25px;">Geog</div>
<div style="left:834px;top:570px;width:1px;height:25px;background:#a8a8a8"></div>
<div class="c" style="left:835px;top:570px;width:35px;height:25px;">Comp</div>
<div style="left:870px;top:570px;width:1px;height:25px;background:#a8a8a8"></div>
<div class="c mu" style="left:871px;top:570px;width:35px;height:25px;">Mus</div>
<div class="c" style="left:907px;top:570px;width:36px;height:25px;">Eng</div>
<div style="left:943px;top:570px;width:1px;height:25px;background:#a8a8a8"></div>
<div class="c" style="left:944px;top:570px;width:35px;height:25px;">Math</div>
<div style="left:979px;top:570px;width:1px;height:25px;background:#a8a8a8"></div>
<div class="c" style="left:980px;top:570px;width:35px;height:25px;">Fre</div>
<div style="left:1015px;top:570px;width:1px;height:25px;background:#a8a8a8"></div>
<div class="c pe" style="left:1016px;top:570px;width:36px;height:25px;">PE</div>
<div style="left:1052px;top:570px;width:1px;height:25px;background:#a8a8a8"></div>
<div class="c" style="left:1053px;top:570px;width:35px;height:25px;">Sci</div>
<div style="left:1088px;top:570px;width:1px;height:25px;background:#a8a8a8"></div>
<div class="c" style="left:1089px;top:570px;width:35px;height:25px;">His</div>
<div style="left:5px;top:595px;width:1119px;height:1px;background:#000"></div>
<div class="rh" style="left:6px;top:596px;width:28px;height:25px;">805</div>
<div class="c" style="left:35px;top:596px;width:35px;height:25px;">Art</div>
<div style="left:70px;top:596px;width:1px;height:25px;background:#a8a8a8"></div>
<div class="c" style="left:71px;top:596px;width:35px;height:25px;">His</div>
<div style="left:106px;top:596px;width:1px;height:25px;background:#a8a8a8"></div>
<div class="c" style="left:107px;top:596px;width:36px;height:25px;">Math</div>
<div style="left:143px;top:596px;width:1px;height:25px;background:#a8a8a8"></div>
<div class="c pe" style="left:144px;top:596px;width:35px;height:25px;">PE</div>
<div style="left:179px;top:596px;width:1px;height:25px;background:#a8a8a8"></div>
<div class="c" style="left:180px;top:596px;width:35px;height:25px;">Eng</div>
<div style="left:215px;top:596px;width:1px;height:25px;background:#a8a8a8"></div>
<div class="c" style="left:216px;top:596px;width:36px;height:25px;">Fre</div>
<div class="c" style="left:253px;top:596px;width:35px;height:25px;">Fre</div>
<div style="left:288px;top:596px;width:1px;height:25px;background:#a8a8a8"></div>
<div class="c mu" style="left:289px;top:596px;width:35px;height:25px;">Mus</div>
<div style="left:324px;top:596px;width:1px;height:25px;background:#a8a8a8"></div>
<div class="c" style="left:325px;top:596px;width:36px;height:25px;">Eng</div>
<div style="left:361px;top:596px;width:1px;height:25px;background:#a8a8a8"></div>
<div class="c" style="left:362px;top:596px;width:35px;height:25px;">Math</div>
<div style="left:397px;top:596px;width:1px;height:25px;background:#a8a8a8"></div>
<div class="c" style="left:398px;top:596px;width:36px;height:25px;">Sci</div>
<div style="left:434px;top:596px;width:1px;height:25px;background:#a8a8a8"></div>
<div class="c pe" style="left:435px;top:596px;width:35px;height:25px;">PE</div>
<div class="c" style="left:471px;top:596px;width:35px;height:25px;">Math</div>
<div style="left:506px;top:596px;width:1px;height:25px;background:#a8a8a8"></div>
<div class="c" style="left:507px;top:596px;width:36px;height:25px;">Eng</div>
<div style="left:543px;top:596px;width:1px;height:25px;background:#a8a8a8"></div>
<div class="c x" style="left:544px;top:596px;width:35px;height:25px;">&#215;</div>
<div style="left:579px;top:596px;width:1px;height:25px;background:#a8a8a8"></div>
<div class="c" style="left:580px;top:596px;width:35px;height:25px;">Fre</div>
<div style="left:615px;top:596px;width:1px;height:25px;background:#a8a8a8"></div>
<div class="c" style="left:616px;top:596px;width:36px;height:25px;">Geog</div>
<div style="left:652px;top:596px;width:1px;height:25px;background:#a8a8a8"></div>
<div class="c" style="left:653px;top:596px;width:35px;height:25px;">Sci</div>
<div class="c" style="left:689px;top:596px;width:35px;height:25px;">Eng</div>
<div style="left:724px;top:596px;width:1px;height:25px;background:#a8a8a8"></div>
<div class="c" style="left:725px;top:596px;width:36px;height:25px;">Fre</div>
<div style="left:761px;top:596px;width:1px;height:25px;background:#a8a8a8"></div>
<div class="c mu" style="left:762px;top:596px;width:35px;height:25px;">Mus</div>
<div style="left:797px;top:596px;width:1px;height:25px;background:#a8a8a8"></div>
<div class="c" style="left:798px;top:596px;width:36px;height:25px;">Math</div>
<div style="left:834px;top:596px;width:1px;height:25px;background:#a8a8a8"></div>
<div class="c" style="left:835px;top:596px;width:35px;height:25px;">His</div>
<div style="left:870px;top:596px;width:1px;height:25px;background:#a8a8a8"></div>
<div class="c" style="left:871px;top:596px;width:35px;height:25px;">Comp</div>
<div class="c pe" style="left:907px;top:596px;width:36px;height:25px;">PE</div>
<div style="left:943px;top:596px;width:1px;height:25px;background:#a8a8a8"></div>
<div class="c" style="left:944px;top:596px;width:35px;height:25px;">Eng</div>
<div style="left:979px;top:596px;width:1px;height:25px;background:#a8a8a8"></div>
<div class="c" style="left:980px;top:596px;width:35px;height:25px;">Sci</div>
<div style="left:1015px;top:596px;width:1px;height:25px;background:#a8a8a8"></div>
<div class="c" style="left:1016px;top:596px;width:36px;height:25px;">Math</div>
<div style="left:1052px;top:596px;width:1px;height:25px;background:#a8a8a8"></div>
<div class="c c2" style="left:1053px;top:596px;width:35px;height:25px;padding-left:6px">Sci<br>Tech</div>
<div style="left:1088px;top:596px;width:1px;height:25px;background:#a8a8a8"></div>
<div class="c" style="left:1089px;top:596px;width:35px;height:25px;">Geog</div>
<div style="left:5px;top:621px;width:1119px;height:1px;background:#000"></div>
<div class="rh" style="left:6px;top:622px;width:28px;height:25px;">806<div class="sub">1</div></div>
<div class="c" style="left:35px;top:622px;width:35px;height:25px;">Math</div>
<div style="left:70px;top:622px;width:1px;height:25px;background:#a8a8a8"></div>
<div class="c" style="left:71px;top:622px;width:35px;height:25px;">Art</div>
<div style="left:106px;top:622px;width:1px;height:25px;background:#a8a8a8"></div>
<div class="c" style="left:107px;top:622px;width:36px;height:25px;">His</div>
<div style="left:143px;top:622px;width:1px;height:25px;background:#a8a8a8"></div>
<div class="c" style="left:144px;top:622px;width:35px;height:25px;">Eng</div>
<div style="left:179px;top:622px;width:1px;height:25px;background:#a8a8a8"></div>
<div class="c" style="left:180px;top:622px;width:35px;height:25px;">Comp</div>
<div style="left:215px;top:622px;width:1px;height:25px;background:#a8a8a8"></div>
<div class="c g" style="left:216px;top:622px;width:36px;height:25px;"></div>
<div class="c" style="left:253px;top:622px;width:35px;height:25px;">Math</div>
<div style="left:288px;top:622px;width:1px;height:25px;background:#a8a8a8"></div>
<div class="c" style="left:289px;top:622px;width:35px;height:25px;">Sci</div>
<div style="left:324px;top:622px;width:1px;height:25px;background:#a8a8a8"></div>
<div class="c pe" style="left:325px;top:622px;width:36px;height:25px;">PE</div>
<div style="left:361px;top:622px;width:1px;height:25px;background:#a8a8a8"></div>
<div class="c" style="left:362px;top:622px;width:35px;height:25px;">Geog</div>
<div style="left:397px;top:622px;width:1px;height:25px;background:#a8a8a8"></div>
<div class="c mu" style="left:398px;top:622px;width:36px;height:25px;">Mus</div>
<div style="left:434px;top:622px;width:1px;height:25px;background:#a8a8a8"></div>
<div class="c" style="left:435px;top:622px;width:35px;height:25px;">Eng</div>
<div class="c" style="left:471px;top:622px;width:35px;height:25px;">Fre</div>
<div style="left:506px;top:622px;width:1px;height:25px;background:#a8a8a8"></div>
<div class="c c2" style="left:507px;top:622px;width:36px;height:25px;padding-left:6px">Sci<br>Tech</div>
<div style="left:543px;top:622px;width:1px;height:25px;background:#a8a8a8"></div>
<div class="c x" style="left:544px;top:622px;width:35px;height:25px;">&#215;</div>
<div style="left:579px;top:622px;width:1px;height:25px;background:#a8a8a8"></div>
<div class="c pe" style="left:580px;top:622px;width:35px;height:25px;">PE</div>
<div style="left:615px;top:622px;width:1px;height:25px;background:#a8a8a8"></div>
<div class="c" style="left:616px;top:622px;width:36px;height:25px;">Math</div>
<div style="left:652px;top:622px;width:1px;height:25px;background:#a8a8a8"></div>
<div class="c" style="left:653px;top:622px;width:35px;height:25px;">Eng</div>
<div class="c" style="left:689px;top:622px;width:35px;height:25px;">Geog</div>
<div style="left:724px;top:622px;width:1px;height:25px;background:#a8a8a8"></div>
<div class="c" style="left:725px;top:622px;width:36px;height:25px;">Eng</div>
<div style="left:761px;top:622px;width:1px;height:25px;background:#a8a8a8"></div>
<div class="c" style="left:762px;top:622px;width:35px;height:25px;">Sci</div>
<div style="left:797px;top:622px;width:1px;height:25px;background:#a8a8a8"></div>
<div class="c" style="left:798px;top:622px;width:36px;height:25px;">Fre</div>
<div style="left:834px;top:622px;width:1px;height:25px;background:#a8a8a8"></div>
<div class="c" style="left:835px;top:622px;width:35px;height:25px;">Math</div>
<div style="left:870px;top:622px;width:1px;height:25px;background:#a8a8a8"></div>
<div class="c mu" style="left:871px;top:622px;width:35px;height:25px;">Mus</div>
<div class="c" style="left:907px;top:622px;width:36px;height:25px;">His</div>
<div style="left:943px;top:622px;width:1px;height:25px;background:#a8a8a8"></div>
<div class="c" style="left:944px;top:622px;width:35px;height:25px;">Fre</div>
<div style="left:979px;top:622px;width:1px;height:25px;background:#a8a8a8"></div>
<div class="c" style="left:980px;top:622px;width:35px;height:25px;">Eng</div>
<div style="left:1015px;top:622px;width:1px;height:25px;background:#a8a8a8"></div>
<div class="c pe" style="left:1016px;top:622px;width:36px;height:25px;">PE</div>
<div style="left:1052px;top:622px;width:1px;height:25px;background:#a8a8a8"></div>
<div class="c" style="left:1053px;top:622px;width:35px;height:25px;">Math</div>
<div style="left:1088px;top:622px;width:1px;height:25px;background:#a8a8a8"></div>
<div class="c" style="left:1089px;top:622px;width:35px;height:25px;">Sci</div>
<div style="left:5px;top:647px;width:1119px;height:1px;background:#000"></div>
<div class="rh" style="left:6px;top:648px;width:28px;height:25px;">807<div class="sub">1</div></div>
<div class="c" style="left:35px;top:648px;width:35px;height:25px;">Fre</div>
<div style="left:70px;top:648px;width:1px;height:25px;background:#a8a8a8"></div>
<div class="c mu" style="left:71px;top:648px;width:35px;height:25px;">Mus</div>
<div style="left:106px;top:648px;width:1px;height:25px;background:#a8a8a8"></div>
<div class="c" style="left:107px;top:648px;width:36px;height:25px;">Math</div>
<div style="left:143px;top:648px;width:1px;height:25px;background:#a8a8a8"></div>
<div class="c pe" style="left:144px;top:648px;width:35px;height:25px;">PE</div>
<div style="left:179px;top:648px;width:1px;height:25px;background:#a8a8a8"></div>
<div class="c" style="left:180px;top:648px;width:35px;height:25px;">Sci</div>
<div style="left:215px;top:648px;width:1px;height:25px;background:#a8a8a8"></div>
<div class="c" style="left:216px;top:648px;width:36px;height:25px;">Eng</div>
<div class="c" style="left:253px;top:648px;width:35px;height:25px;">Eng</div>
<div style="left:288px;top:648px;width:1px;height:25px;background:#a8a8a8"></div>
<div class="c" style="left:289px;top:648px;width:35px;height:25px;">Math</div>
<div style="left:324px;top:648px;width:1px;height:25px;background:#a8a8a8"></div>
<div class="c" style="left:325px;top:648px;width:36px;height:25px;">Geog</div>
<div style="left:361px;top:648px;width:1px;height:25px;background:#a8a8a8"></div>
<div class="c" style="left:362px;top:648px;width:35px;height:25px;">Sci</div>
<div style="left:397px;top:648px;width:1px;height:25px;background:#a8a8a8"></div>
<div class="c" style="left:398px;top:648px;width:36px;height:25px;">His</div>
<div style="left:434px;top:648px;width:1px;height:25px;background:#a8a8a8"></div>
<div class="c pe" style="left:435px;top:648px;width:35px;height:25px;">PE</div>
<div class="c" style="left:471px;top:648px;width:35px;height:25px;">Art</div>
<div style="left:506px;top:648px;width:1px;height:25px;background:#a8a8a8"></div>
<div class="c" style="left:507px;top:648px;width:36px;height:25px;">Math</div>
<div style="left:543px;top:648px;width:1px;height:25px;background:#a8a8a8"></div>
<div class="c x" style="left:544px;top:648px;width:35px;height:25px;">&#215;</div>
<div style="left:579px;top:648px;width:1px;height:25px;background:#a8a8a8"></div>
<div class="c" style="left:580px;top:648px;width:35px;height:25px;">Eng</div>
<div style="left:615px;top:648px;width:1px;height:25px;background:#a8a8a8"></div>
<div class="c" style="left:616px;top:648px;width:36px;height:25px;">Fre</div>
<div style="left:652px;top:648px;width:1px;height:25px;background:#a8a8a8"></div>
<div class="c mu" style="left:653px;top:648px;width:35px;height:25px;">Mus</div>
<div class="c" style="left:689px;top:648px;width:35px;height:25px;">Sci</div>
<div style="left:724px;top:648px;width:1px;height:25px;background:#a8a8a8"></div>
<div class="c" style="left:725px;top:648px;width:36px;height:25px;">Geog</div>
<div style="left:761px;top:648px;width:1px;height:25px;background:#a8a8a8"></div>
<div class="c" style="left:762px;top:648px;width:35px;height:25px;">Math</div>
<div style="left:797px;top:648px;width:1px;height:25px;background:#a8a8a8"></div>
<div class="c" style="left:798px;top:648px;width:36px;height:25px;">Comp</div>
<div style="left:834px;top:648px;width:1px;height:25px;background:#a8a8a8"></div>
<div class="c" style="left:835px;top:648px;width:35px;height:25px;">Fre</div>
<div style="left:870px;top:648px;width:1px;height:25px;background:#a8a8a8"></div>
<div class="c" style="left:871px;top:648px;width:35px;height:25px;">Eng</div>
<div class="c pe" style="left:907px;top:648px;width:36px;height:25px;">PE</div>
<div style="left:943px;top:648px;width:1px;height:25px;background:#a8a8a8"></div>
<div class="c c2" style="left:944px;top:648px;width:35px;height:25px;padding-left:6px">Sci<br>Tech</div>
<div style="left:979px;top:648px;width:1px;height:25px;background:#a8a8a8"></div>
<div class="c" style="left:980px;top:648px;width:35px;height:25px;">Math</div>
<div style="left:1015px;top:648px;width:1px;height:25px;background:#a8a8a8"></div>
<div class="c" style="left:1016px;top:648px;width:36px;height:25px;">His</div>
<div style="left:1052px;top:648px;width:1px;height:25px;background:#a8a8a8"></div>
<div class="c g" style="left:1053px;top:648px;width:35px;height:25px;"></div>
<div style="left:1088px;top:648px;width:1px;height:25px;background:#a8a8a8"></div>
<div class="c" style="left:1089px;top:648px;width:35px;height:25px;">Eng</div>
<div style="left:5px;top:673px;width:1119px;height:1px;background:#000"></div>
<div style="left:4px;top:707px;width:1px;height:110px;background:#808080"></div>
<div style="left:5px;top:708px;width:1120px;height:1px;background:#000"></div>
<div style="left:5px;top:708px;width:1px;height:109px;background:#000"></div>
<div style="left:6px;top:709px;width:1119px;height:108px;background:#7a7a8f"></div>
<div style="left:6px;top:709px;width:296px;height:1px;background:#86869a"></div>
<div style="left:3px;top:817px;width:1123px;height:3px;background:#e4e0d6"></div>
<div style="left:16px;top:719px;width:190px;height:62px;background:#8e8c9f;border-top:1px solid #fff;border-left:1px solid #fff;border-right:2px solid #000;border-bottom:2px solid #000"></div>
<div style="left:17px;top:720px;width:37px;height:59px;background:#94929f"></div>
<div style="left:20px;top:722px;width:28px;height:27px;background:#fffcfb;font-size:11px;line-height:27px;padding-top:1px;text-align:center;color:#000">Mus</div>
<div style="left:69px;top:720px;font-size:11px;line-height:14px;color:#f4f438;white-space:nowrap">Mus - Music</div>
<div style="left:69px;top:735px;font-size:11px;line-height:14px;color:#f4f438;white-space:nowrap">604, 601</div>
<div style="left:69px;top:750px;font-size:11px;line-height:14px;color:#f4f438;white-space:nowrap">Ma, Ju</div>
<div style="left:69px;top:765px;font-size:11px;line-height:14px;color:#f4f438;white-space:nowrap">106V</div>
<svg style="left:50px;top:715px" width="20" height="66" viewBox="50 715 20 66">
<path d="M56 726 L61 722.3 L65 725.2 L65 728.5 L60 732 L56 729 Z" fill="#f0f0f0" stroke="#404040" stroke-width="0.6"/>
<path d="M56 726 L61 722.3 L65 725.2 L60 729 Z" fill="#d010d0"/>
<path d="M56 726 V729 L60 732" stroke="#ff40ff" stroke-width="0.9" fill="none"/>
<path d="M56.2 746.8 Q56.5 743.5 59 743 L62 743 Q64 743.5 64.5 746.8 Z" fill="#1020d0"/>
<path d="M62.5 744 L64.8 746.6 L63.4 746.8Z" fill="#e01010"/>
<ellipse cx="60.5" cy="741.2" rx="2.6" ry="3" fill="#e8e800"/>
<path d="M56.3 742.5 Q56 738 60 737.8 Q63.5 738 63.5 740 L59.5 740.5 L58.5 743.5 Z" fill="#101010"/>
<path d="M55.8 756 L60.5 752 L65.2 756 L60.5 759.4 Z" fill="#0818f0" stroke="#101010" stroke-width="0.5"/>
<path d="M57.5 757.5 V760 Q60.5 762 63.5 760 V757.5 L60.5 759.6Z" fill="#1028d0" stroke="#101010" stroke-width="0.5"/>
<path d="M56.2 771 L58.5 768.3 H63.5 L61.2 771 Z" fill="#901010"/>
<path d="M57 771 V774" stroke="#901010" stroke-width="1.2"/>
<path d="M58 774 L60.5 771.6 H65 L62.5 774 Z" fill="#901010"/>
<path d="M59 774 V776.5 M63.5 774 V776.5" stroke="#303030" stroke-width="1"/>
</svg>
<div style="left:303px;top:708px;width:822px;height:109px;background:#d0cfd4;border-top:2px solid #000;border-left:1px solid #000;border-right:1px solid #000;border-bottom:1px solid #000"></div>
<div style="left:304px;top:710px;width:818px;height:1px;background:#e4e4e8"></div>
<div style="left:304px;top:710px;width:1px;height:105px;background:#e4e4e8"></div>
<div style="left:1122px;top:710px;width:1px;height:106px;background:#fff"></div>
<div style="left:304px;top:815px;width:819px;height:1px;background:#fff"></div>
<div style="left:307px;top:713px;width:38px;height:27px;background:#fffcfb;border-right:1px solid #000;border-bottom:1px solid #000;border-top:1px solid #fff;border-left:1px solid #fff;font-size:11px;line-height:25px;padding-top:1px;text-align:center;color:#000">Fre</div>
<div style="left:352px;top:713px;width:38px;height:27px;background:#fffcfb;border-right:1px solid #000;border-bottom:1px solid #000;border-top:1px solid #fff;border-left:1px solid #fff;font-size:11px;line-height:25px;padding-top:1px;text-align:center;color:#000">Fre</div>
<div style="left:397px;top:713px;width:38px;height:27px;background:#fffcfb;border-right:1px solid #000;border-bottom:1px solid #000;border-top:1px solid #fff;border-left:1px solid #fff;font-size:11px;line-height:25px;padding-top:1px;text-align:center;color:#000">SS</div>
<div style="left:444px;top:715px;width:38px;height:27px;background:#fff;border-right:1px solid #8c8c8c;border-bottom:1px solid #8c8c8c"></div>
<div style="left:442px;top:713px;width:38px;height:27px;background:#fffcfb;border-right:1px solid #000;border-bottom:1px solid #000;border-top:1px solid #fff;border-left:1px solid #fff;font-size:11px;line-height:25px;padding-top:1px;text-align:center;color:#000">Fre</div>
<div style="left:487px;top:713px;width:38px;height:27px;background:#fffcfb;border-right:1px solid #000;border-bottom:1px solid #000;border-top:1px solid #fff;border-left:1px solid #fff;font-size:11px;line-height:25px;padding-top:1px;text-align:center;color:#000">Fre</div>
<div style="left:536px;top:717px;width:38px;height:27px;background:#fff;border-right:1px solid #8c8c8c;border-bottom:1px solid #8c8c8c"></div>
<div style="left:534px;top:715px;width:38px;height:27px;background:#fff;border-right:1px solid #8c8c8c;border-bottom:1px solid #8c8c8c"></div>
<div style="left:532px;top:713px;width:38px;height:27px;background:#fffcfb;border-right:1px solid #000;border-bottom:1px solid #000;border-top:1px solid #fff;border-left:1px solid #fff;font-size:11px;line-height:25px;padding-top:1px;text-align:center;color:#000">Fre</div>
<div style="left:577px;top:713px;width:38px;height:27px;background:#fffcfb;border-right:1px solid #000;border-bottom:1px solid #000;border-top:1px solid #fff;border-left:1px solid #fff;font-size:11px;line-height:25px;padding-top:1px;text-align:center;color:#000">Fre</div>
<div style="left:622px;top:713px;width:38px;height:27px;background:#fffcfb;border-right:1px solid #000;border-bottom:1px solid #000;border-top:1px solid #fff;border-left:1px solid #fff;font-size:11px;line-height:25px;padding-top:1px;text-align:center;color:#000">Eng</div>
<div style="left:673px;top:719px;width:38px;height:27px;background:#fff;border-right:1px solid #8c8c8c;border-bottom:1px solid #8c8c8c"></div>
<div style="left:671px;top:717px;width:38px;height:27px;background:#fff;border-right:1px solid #8c8c8c;border-bottom:1px solid #8c8c8c"></div>
<div style="left:669px;top:715px;width:38px;height:27px;background:#fff;border-right:1px solid #8c8c8c;border-bottom:1px solid #8c8c8c"></div>
<div style="left:667px;top:713px;width:38px;height:27px;background:#fffcfb;border-right:1px solid #000;border-bottom:1px solid #000;border-top:1px solid #fff;border-left:1px solid #fff;font-size:11px;line-height:25px;padding-top:1px;text-align:center;color:#000">Fre</div>
<div style="left:712px;top:713px;width:38px;height:27px;background:#fffcfb;border-right:1px solid #000;border-bottom:1px solid #000;border-top:1px solid #fff;border-left:1px solid #fff;font-size:11px;line-height:25px;padding-top:1px;text-align:center;color:#000">Mus</div>
<div style="left:757px;top:713px;width:38px;height:27px;background:linear-gradient(#ff9070,#ff4500 6px);border-right:1px solid #000;border-bottom:1px solid #000;border-top:1px solid #fff;border-left:1px solid #fff;font-size:11px;line-height:25px;padding-top:1px;text-align:center;color:#000">Eng</div>
<svg style="left:0;top:790px" width="1132" height="30" viewBox="0 790 1132 30">
<rect x="305" y="799" width="195" height="16" fill="#cbcad2"/>
<rect x="304" y="798" width="181" height="1" fill="#ffffff"/>

<path d="M330.8 799 L346.7 815 M371 799 L386.9 815 M411 799 L426.5 815 M448.1 799 L463.6 815 M484.8 799 L499.4 815" stroke="#222" stroke-width="1"/>
<path d="M331.8 799 L347.7 815 M372 799 L387.9 815 M412 799 L427.5 815 M449.1 799 L464.6 815 M485.8 799 L500.4 815" stroke="#fff" stroke-width="0.8" opacity="0.8"/>
<!-- chart -->
<rect x="312" y="804" width="2.6" height="6" fill="#f06060"/>
<rect x="314.3" y="807" width="2.4" height="4" fill="#a8a0f0"/>
<rect x="316.2" y="803" width="2.6" height="5" fill="#20c020"/>
<rect x="318.6" y="805" width="2.6" height="6" fill="#800090"/>
<!-- teacher -->
<path d="M351.5 813.8 Q352 809.5 356 809 L360 809 Q362.5 810 363 813.8 Z" fill="#1020e0"/>
<path d="M360 809.5 L363 812.5 L361 813" fill="#e02020"/>
<ellipse cx="357.3" cy="805.5" rx="3.2" ry="3.8" fill="#f0f000"/>
<path d="M352.5 806.5 Q352 800.8 357 800.2 Q361 800.5 361.2 803 L356 803.5 L355 808 Z" fill="#101010"/>
<path d="M357 806 L360 806" stroke="#101010" stroke-width="0.8"/>
<!-- grad cap -->
<path d="M389.5 804.3 L396.5 800.5 L404 804.3 L396.5 808 Z" fill="#1018e8"/>
<path d="M392.5 806 V810.5 Q396.5 812.5 400.5 810.5 V806 L396.5 808 Z" fill="#108080" stroke="#101010" stroke-width="0.6"/>
<path d="M403 804.5 V810" stroke="#1018e8" stroke-width="1"/>
<!-- book -->
<path d="M430.8 806.5 L437 800.3 L444 805.5 L444 810 L437.5 814.7 L430.8 810.5 Z" fill="#e8f4f8" stroke="#303030" stroke-width="0.7"/>
<path d="M430.8 806.5 L437 800.3 L444 805.5 L437.5 810.5 Z" fill="#9010a0"/>
<path d="M431 806.3 L437 800.6 L438.5 801.8 L432.6 807.7 Z" fill="#ff40ff"/>
<path d="M430.8 806.5 V810.5 L437.5 814.7" stroke="#d020d0" stroke-width="1" fill="none"/>
<!-- desks -->
<path d="M468.5 803.5 L471 801 H479.5 L477 803.5 Z" fill="#901010"/>
<path d="M469 803.5 V807.5 M475.8 803.5 V805.5" stroke="#101010" stroke-width="1.1"/>
<path d="M471.5 808.8 L474 806 H482 L479.5 808.8 Z" fill="#901010"/>
<path d="M472.5 808.8 V813.5 M479.3 808.8 V813.5 M481.5 807 V810.5" stroke="#101010" stroke-width="1.1"/>
</svg>

<div style="left:1px;top:820px;width:1129px;height:1px;background:#5d87c0"></div>
<div style="left:1px;top:821px;width:841px;height:21px;background:linear-gradient(#e0ecfa,#cadef6 40%,#b8d1f1 45%,#c7dbf4 100%)"></div>
<div style="left:842px;top:821px;width:288px;height:21px;background:linear-gradient(#c3d7f0,#a9c5ea 40%,#90b3e2 45%,#a4c1e8 100%)"></div>
<div style="left:842px;top:821px;width:1px;height:21px;background:#fff"></div>
<div class="mt" style="left:7px;top:825px;font-size:11px;color:#15428b">Ready</div>
<div class="mt" style="left:948px;top:825px;font-size:11px;color:#15428b">100%</div>
<svg style="left:0;top:815px" width="1132" height="28" viewBox="0 815 1132 28">
<defs><linearGradient id="zbtn" x1="0" y1="0" x2="0" y2="1"><stop offset="0" stop-color="#fbfdff"/><stop offset="0.5" stop-color="#dde7f3"/><stop offset="1" stop-color="#b4c8e2"/></linearGradient></defs>
<path d="M996 831 H1091" stroke="#f4f8fc" stroke-width="1"/>
<path d="M996 832 H1091" stroke="#7f9cc4" stroke-width="0.7" opacity="0.5"/>
<path d="M1044.5 826 V836" stroke="#f4f8fc" stroke-width="1"/>
<circle cx="987.8" cy="831" r="7.6" fill="url(#zbtn)" stroke="#52729c" stroke-width="1.1"/>
<path d="M984 831 H991.6" stroke="#2f4a70" stroke-width="2"/>
<circle cx="1099.6" cy="831" r="7.6" fill="url(#zbtn)" stroke="#52729c" stroke-width="1.1"/>
<path d="M1095.8 831 H1103.4 M1099.6 827.2 V834.8" stroke="#2f4a70" stroke-width="2"/>
<path d="M1018.5 825 H1028 V833.5 L1023.25 837.5 L1018.5 833.5 Z" fill="url(#zbtn)" stroke="#4f6e98" stroke-width="1"/>
<path d="M1023.3 828 V833.5" stroke="#8aa0c0" stroke-width="1"/>
<g fill="#4f6e98"><rect x="1124.5" y="827" width="1.8" height="1.8"/><rect x="1121" y="831" width="1.8" height="1.8"/><rect x="1124.5" y="831" width="1.8" height="1.8"/><rect x="1117.5" y="834.6" width="1.8" height="1.8"/><rect x="1121" y="834.6" width="1.8" height="1.8"/><rect x="1124.5" y="834.6" width="1.8" height="1.8"/></g>
</svg>

<svg style="left:0;top:0" width="1132" height="843" viewBox="0 0 1132 843">
<path d="M0 0 H5 Q0.8 0.8 0 5 Z" fill="#f4f6fa"/>
<path d="M0.5 5.5 Q0.8 0.8 5.5 0.5" stroke="#2e4f7c" stroke-width="1" fill="none"/>
<path d="M1132 0 H1126 Q1131 0.8 1132 6 Z" fill="#f4f6fa"/>
<path d="M1126 0.5 Q1130.6 0.8 1131 6" stroke="#2e4f7c" stroke-width="1.6" fill="none"/>
<path d="M0 843 H5 Q0.8 842.2 0 838 Z" fill="#f4f6fa"/>
<path d="M0.5 837.5 Q0.8 842.2 5.5 842.5" stroke="#2e4f7c" stroke-width="1" fill="none"/>
<path d="M1132 843 H1126 Q1131 842.2 1132 837 Z" fill="#f4f6fa"/>
<path d="M1126 842.5 Q1130.6 842.2 1131 837" stroke="#2e4f7c" stroke-width="1.6" fill="none"/>
</svg>
</body></html>
